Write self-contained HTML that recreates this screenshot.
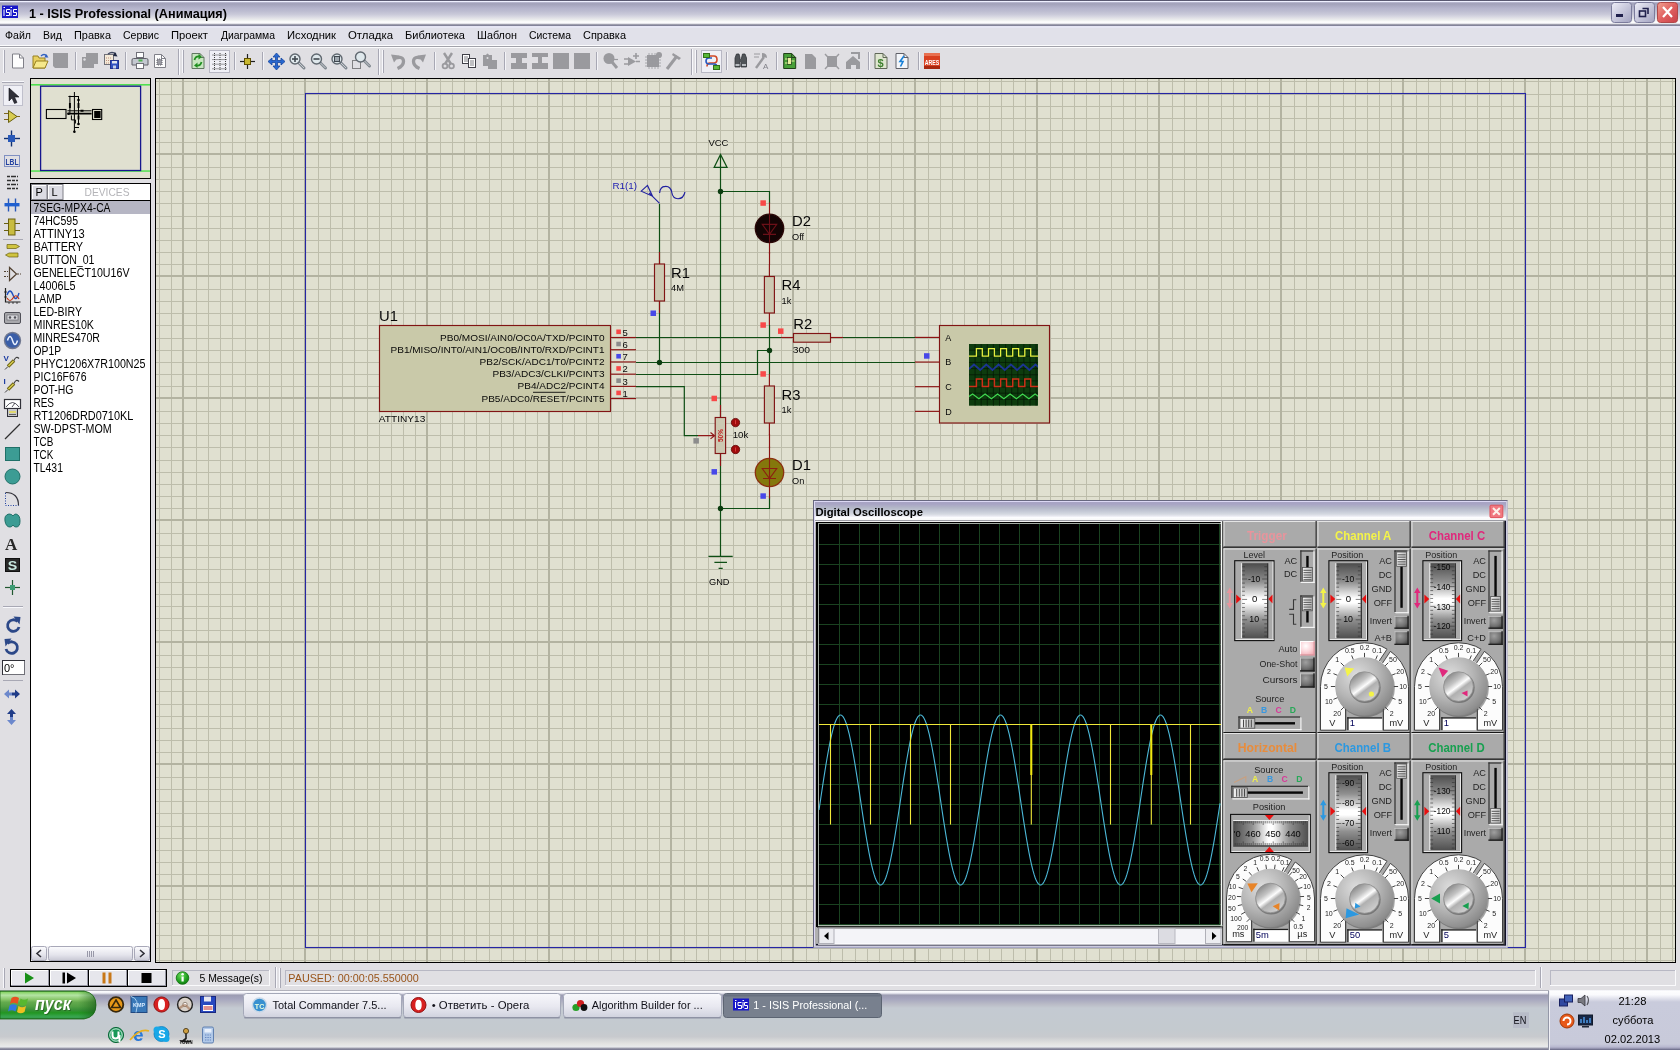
<!DOCTYPE html>
<html lang="ru"><head><meta charset="utf-8"><title>1 - ISIS Professional</title>
<style>html,body{margin:0;padding:0}body{width:1680px;height:1050px;overflow:hidden;position:relative;background:#e0dfe3;font-family:"Liberation Sans",sans-serif}svg text{white-space:pre}</style></head>
<body>
<div id="titlebar" style="position:absolute;left:0px;top:0px;width:1680px;height:26px;overflow:hidden;will-change:transform;"><svg width="1680" height="26" viewBox="0 0 1680 26" style="position:absolute;left:0;top:0;display:block" font-family="Liberation Sans, sans-serif"><defs><linearGradient id="tg" x1="0" y1="0" x2="0" y2="1"><stop offset="0" stop-color="#505068"/><stop offset="0.035" stop-color="#606078"/><stop offset="0.045" stop-color="#eef0ff"/><stop offset="0.07" stop-color="#eef0ff"/><stop offset="0.09" stop-color="#b8b8d0"/><stop offset="0.13" stop-color="#a4a4bc"/><stop offset="0.17" stop-color="#a4a4bc"/><stop offset="0.31" stop-color="#b4b4cc"/><stop offset="0.42" stop-color="#bcbcd0"/><stop offset="0.54" stop-color="#c8c8d8"/><stop offset="0.62" stop-color="#d4d4e0"/><stop offset="0.69" stop-color="#e0e0e6"/><stop offset="0.77" stop-color="#eceeee"/><stop offset="0.85" stop-color="#ffffff"/><stop offset="0.89" stop-color="#f6f6fa"/><stop offset="0.925" stop-color="#c8c8d0"/><stop offset="0.96" stop-color="#74748a"/><stop offset="1" stop-color="#9090a8"/></linearGradient><linearGradient id="bg1" x1="0" y1="0" x2="1" y2="1"><stop offset="0" stop-color="#eeeef8"/><stop offset="1" stop-color="#a2a2c0"/></linearGradient><linearGradient id="bg2" x1="0" y1="0" x2="1" y2="1"><stop offset="0" stop-color="#f0a090"/><stop offset="0.5" stop-color="#e06060"/><stop offset="1" stop-color="#c84048"/></linearGradient></defs><rect x="0" y="0" width="1680" height="26" fill="url(#tg)"/><rect x="2" y="5.5" width="16" height="12.5" fill="#1818c8"/><path d="M4 9.5v6.5M3.500 7.500h1.500M6 15.500h3.500v-3h-3v-3h3.500M11 9.500v6.500M10.500 7.500h1.500M13 15.500h3.500v-3h-3v-3h3.500" fill="none" stroke="#fff" stroke-width="1"/><text x="29" y="18" font-size="13" fill="#000" font-weight="bold" textLength="198" lengthAdjust="spacingAndGlyphs">1 - ISIS Professional (Анимация)</text><rect x="1611.5" y="2.5" width="20" height="20" fill="url(#bg1)" stroke="#7c7c9c" stroke-width="1" rx="3"/><rect x="1616" y="14" width="7" height="3" fill="#20204c"/><rect x="1634.5" y="2.5" width="20" height="20" fill="url(#bg1)" stroke="#7c7c9c" stroke-width="1" rx="3"/><path d="M1642.5 8.5h5.5v5.5" fill="none" stroke="#20204c" stroke-width="1.6"/><rect x="1639.5" y="11" width="6" height="5.5" fill="none" stroke="#20204c" stroke-width="1.6"/><rect x="1657.5" y="2.5" width="20" height="20" fill="url(#bg2)" stroke="#b04848" stroke-width="1" rx="3"/><path d="M1663 7l9 10M1672 7l-9 10" fill="none" stroke="#fff" stroke-width="2.2"/></svg></div>
<div id="menubar" style="position:absolute;left:0px;top:26px;width:1680px;height:20px;overflow:hidden;will-change:transform;"><svg width="1680" height="20" viewBox="0 26 1680 20" style="position:absolute;left:0;top:0;display:block" font-family="Liberation Sans, sans-serif"><rect x="0" y="26" width="1680" height="20" fill="#e1e1ea"/><rect x="0" y="26" width="1680" height="2" fill="#e6e6f4"/><rect x="0" y="45" width="1680" height="1" fill="#fcfcfe"/><text x="5" y="39" font-size="11" fill="#000" textLength="26" lengthAdjust="spacingAndGlyphs">Файл</text><text x="43" y="39" font-size="11" fill="#000" textLength="19" lengthAdjust="spacingAndGlyphs">Вид</text><text x="74" y="39" font-size="11" fill="#000" textLength="37" lengthAdjust="spacingAndGlyphs">Правка</text><text x="123" y="39" font-size="11" fill="#000" textLength="36" lengthAdjust="spacingAndGlyphs">Сервис</text><text x="171" y="39" font-size="11" fill="#000" textLength="37" lengthAdjust="spacingAndGlyphs">Проект</text><text x="221" y="39" font-size="11" fill="#000" textLength="54" lengthAdjust="spacingAndGlyphs">Диаграмма</text><text x="287" y="39" font-size="11" fill="#000" textLength="49" lengthAdjust="spacingAndGlyphs">Исходник</text><text x="348" y="39" font-size="11" fill="#000" textLength="45" lengthAdjust="spacingAndGlyphs">Отладка</text><text x="405" y="39" font-size="11" fill="#000" textLength="60" lengthAdjust="spacingAndGlyphs">Библиотека</text><text x="477" y="39" font-size="11" fill="#000" textLength="40" lengthAdjust="spacingAndGlyphs">Шаблон</text><text x="529" y="39" font-size="11" fill="#000" textLength="42" lengthAdjust="spacingAndGlyphs">Система</text><text x="583" y="39" font-size="11" fill="#000" textLength="43" lengthAdjust="spacingAndGlyphs">Справка</text></svg></div>
<div id="toolbar" style="position:absolute;left:0px;top:46px;width:1680px;height:32px;overflow:hidden;will-change:transform;"><svg width="1680" height="32" viewBox="0 46 1680 32" style="position:absolute;left:0;top:0;display:block" font-family="Liberation Sans, sans-serif"><rect x="0" y="46" width="1680" height="32" fill="#e0dfe3"/><rect x="0" y="46" width="1680" height="1" fill="#a2a2aa"/><rect x="0" y="47" width="1680" height="1" fill="#fbfbfd"/><rect x="3" y="50" width="1" height="23" fill="#f8f8fc"/><rect x="4" y="50" width="1" height="23" fill="#a8a8b4"/><rect x="182" y="50" width="1" height="23" fill="#f8f8fc"/><rect x="183" y="50" width="1" height="23" fill="#a8a8b4"/><rect x="382" y="50" width="1" height="23" fill="#f8f8fc"/><rect x="383" y="50" width="1" height="23" fill="#a8a8b4"/><rect x="695" y="50" width="1" height="23" fill="#f8f8fc"/><rect x="696" y="50" width="1" height="23" fill="#a8a8b4"/><rect x="178" y="49" width="1" height="26" fill="#a8a8b4"/><rect x="179" y="49" width="1" height="26" fill="#f8f8fc"/><rect x="378" y="49" width="1" height="26" fill="#a8a8b4"/><rect x="379" y="49" width="1" height="26" fill="#f8f8fc"/><rect x="691" y="49" width="1" height="26" fill="#a8a8b4"/><rect x="692" y="49" width="1" height="26" fill="#f8f8fc"/><rect x="75" y="52" width="1" height="18" fill="#a8a8b4"/><rect x="76" y="52" width="1" height="18" fill="#f4f4f8"/><rect x="125" y="52" width="1" height="18" fill="#a8a8b4"/><rect x="126" y="52" width="1" height="18" fill="#f4f4f8"/><rect x="234" y="52" width="1" height="18" fill="#a8a8b4"/><rect x="235" y="52" width="1" height="18" fill="#f4f4f8"/><rect x="262" y="52" width="1" height="18" fill="#a8a8b4"/><rect x="263" y="52" width="1" height="18" fill="#f4f4f8"/><rect x="434" y="52" width="1" height="18" fill="#a8a8b4"/><rect x="435" y="52" width="1" height="18" fill="#f4f4f8"/><rect x="504" y="52" width="1" height="18" fill="#a8a8b4"/><rect x="505" y="52" width="1" height="18" fill="#f4f4f8"/><rect x="596" y="52" width="1" height="18" fill="#a8a8b4"/><rect x="597" y="52" width="1" height="18" fill="#f4f4f8"/><rect x="726" y="52" width="1" height="18" fill="#a8a8b4"/><rect x="727" y="52" width="1" height="18" fill="#f4f4f8"/><rect x="776" y="52" width="1" height="18" fill="#a8a8b4"/><rect x="777" y="52" width="1" height="18" fill="#f4f4f8"/><rect x="868" y="52" width="1" height="18" fill="#a8a8b4"/><rect x="869" y="52" width="1" height="18" fill="#f4f4f8"/><rect x="918" y="52" width="1" height="18" fill="#a8a8b4"/><rect x="919" y="52" width="1" height="18" fill="#f4f4f8"/><path d="M12.5 54h7l4 4v10h-11z" fill="#fdfdfd" stroke="#808088" stroke-width="1"/><path d="M19.5 54v4h4" fill="none" stroke="#808088" stroke-width="1"/><path d="M33 56h5l1 2h6v10h-12z" fill="#e8d060" stroke="#988020" stroke-width="1"/><path d="M33 68l3 -7h12l-3 7z" fill="#f6e88a" stroke="#988020" stroke-width="1"/><path d="M41 56q3 -3 6 0" fill="none" stroke="#3060c0" stroke-width="1.4"/><polygon points="46,54 48.5,57.5 44.5,57.5" fill="#3060c0"/><path d="M53 53h15v15h-13l-2 -2z" fill="#9a9a9e"/><path d="M86 53h12v11h-4v4h-12v-11h4z" fill="#9a9a9e"/><circle cx="84.5" cy="59.5" r="1.2" fill="#e0dfe3"/><rect x="104.5" y="54.5" width="9" height="10" fill="#f4ead8" stroke="#707078" stroke-width="1"/><path d="M106 58h6M106 60.5h6M106 63h6" fill="none" stroke="#c09080" stroke-width="1" stroke-dasharray="1 1"/><path d="M108 54q4 -3 8 0" fill="none" stroke="#404860" stroke-width="1.3"/><polygon points="115,52 117.5,56.5 113,56" fill="#202840"/><rect x="110.5" y="60.5" width="8" height="8" fill="#3050c0" stroke="#203090" stroke-width="1"/><rect x="112" y="61" width="5" height="2.5" fill="#e0e4f0"/><rect x="113" y="65.5" width="3" height="3" fill="#c8d0e8"/><rect x="136.5" y="52.5" width="7" height="5" fill="#fff" stroke="#707078" stroke-width="1"/><path d="M133.500 58.500h13q1.500 0 1.500 1.500v5h-16v-5q0 -1.500 1.500 -1.500z" fill="#c4c8d0" stroke="#606068" stroke-width="1"/><rect x="136.5" y="63.5" width="7" height="5" fill="#fff" stroke="#707078" stroke-width="1"/><rect x="138.5" y="59.5" width="4" height="2" fill="#50b050"/><path d="M154.5 54.5h7l4 4v9h-11z" fill="#fdfdfd" stroke="#808088" stroke-width="1"/><path d="M161.5 54.5v4h4" fill="none" stroke="#808088" stroke-width="1"/><rect x="157" y="59" width="5" height="6" fill="#9a9aa2" stroke-dasharray="1 1" stroke="#606068"/><path d="M192 53.5h8l4 4v11h-12z" fill="#c8e6c0" stroke="#607860" stroke-width="1"/><path d="M200 53.5v4h4" fill="none" stroke="#607860" stroke-width="1"/><path d="M194.500 60q1 -4 5 -3.500M201.500 62q-1 4 -5 3.500" fill="none" stroke="#209020" stroke-width="1.8"/><polygon points="198.5,54 202,57 198.5,59.5" fill="#209020"/><polygon points="197.5,62.5 194,65.5 197.5,68" fill="#209020"/><rect x="209.5" y="50.5" width="20" height="22" fill="#f0f0f6" stroke="#b8b8c4" stroke-width="1"/><line x1="212.5" y1="55" x2="227" y2="55" stroke="#404040" stroke-width="1" stroke-dasharray="1 1"/><line x1="212.5" y1="59.6" x2="227" y2="59.6" stroke="#404040" stroke-width="1" stroke-dasharray="1 1"/><line x1="212.5" y1="64.2" x2="227" y2="64.2" stroke="#404040" stroke-width="1" stroke-dasharray="1 1"/><line x1="212.5" y1="68.8" x2="227" y2="68.8" stroke="#404040" stroke-width="1" stroke-dasharray="1 1"/><line x1="214.5" y1="53" x2="214.5" y2="71" stroke="#404040" stroke-width="1" stroke-dasharray="1 1"/><line x1="220" y1="53" x2="220" y2="71" stroke="#404040" stroke-width="1" stroke-dasharray="1 1"/><line x1="225.5" y1="53" x2="225.5" y2="71" stroke="#404040" stroke-width="1" stroke-dasharray="1 1"/><line x1="240" y1="61.5" x2="255" y2="61.5" stroke="#202020" stroke-width="1.2"/><line x1="247.5" y1="54" x2="247.5" y2="69" stroke="#202020" stroke-width="1.2"/><rect x="244.5" y="58.5" width="6" height="6" fill="#c8b830" stroke="#605000" stroke-width="1"/><path d="M276.500 53l3.500 4h-2.500v3.500h3.500v-2.500l4 3.500l-4 3.500v-2.500h-3.500v3.500h2.500l-3.500 4l-3.500 -4h2.500v-3.500h-3.500v2.500l-4 -3.500l4 -3.500v2.500h3.500v-3.500h-2.500z" fill="#2868d0" stroke="#1848a0" stroke-width="0.8"/><line x1="298" y1="62" x2="304" y2="68" stroke="#808890" stroke-width="3" stroke-linecap="round"/><line x1="299" y1="63" x2="304" y2="68" stroke="#c8ccd0" stroke-width="1"/><circle cx="295" cy="59" r="5" fill="#dfe8ec" stroke="#606870" stroke-width="1.4"/><line x1="292" y1="59" x2="298" y2="59" stroke="#404850" stroke-width="1.6"/><line x1="295" y1="56" x2="295" y2="62" stroke="#404850" stroke-width="1.6"/><line x1="319.5" y1="62" x2="325.5" y2="68" stroke="#808890" stroke-width="3" stroke-linecap="round"/><line x1="320.5" y1="63" x2="325.5" y2="68" stroke="#c8ccd0" stroke-width="1"/><circle cx="316.5" cy="59" r="5" fill="#dfe8ec" stroke="#606870" stroke-width="1.4"/><line x1="313.5" y1="59" x2="319.5" y2="59" stroke="#404850" stroke-width="1.6"/><line x1="340" y1="62" x2="346" y2="68" stroke="#808890" stroke-width="3" stroke-linecap="round"/><line x1="341" y1="63" x2="346" y2="68" stroke="#c8ccd0" stroke-width="1"/><circle cx="337" cy="59" r="5" fill="#dfe8ec" stroke="#606870" stroke-width="1.4"/><rect x="334.5" y="56.5" width="5" height="5" fill="#a0a8b0" stroke="#404850" stroke-width="1"/><rect x="352.5" y="60.5" width="8" height="8" fill="none" stroke="#202020" stroke-width="1" stroke-dasharray="1 1"/><line x1="363.5" y1="60" x2="369.5" y2="66" stroke="#808890" stroke-width="3" stroke-linecap="round"/><line x1="364.5" y1="61" x2="369.5" y2="66" stroke="#c8ccd0" stroke-width="1"/><circle cx="360.5" cy="57" r="5" fill="#dfe8ec" stroke="#606870" stroke-width="1.4"/><polygon points="391,54.5 399.5,55.5 394,62.5" fill="#9a9a9e"/><path d="M396 58q7.500 -2 7.500 3.500q0 4.500 -6 7" fill="none" stroke="#9a9a9e" stroke-width="3.3"/><polygon points="426,54.5 417.5,55.5 423,62.5" fill="#9a9a9e"/><path d="M421 58q-7.500 -2 -7.500 3.500q0 4.500 6 7" fill="none" stroke="#9a9a9e" stroke-width="3.3"/><path d="M444 53l7 11M452 53l-7 11" fill="none" stroke="#9a9a9e" stroke-width="2.4"/><circle cx="445" cy="66" r="2.4" fill="none" stroke="#9a9a9e" stroke-width="1.8"/><circle cx="451.5" cy="66" r="2.4" fill="none" stroke="#9a9a9e" stroke-width="1.8"/><rect x="462.5" y="54.5" width="7" height="9" fill="#fff" stroke="#404048" stroke-width="1"/><path d="M464 57h4M464 59h4M464 61h4" fill="none" stroke="#606068" stroke-width="0.8"/><rect x="468.5" y="58.5" width="7" height="9" fill="#fff" stroke="#404048" stroke-width="1"/><path d="M470 61h4M470 63h4M470 65h4" fill="none" stroke="#606068" stroke-width="0.8"/><path d="M483 55h3q1.500 -3 3 0h3v5h5v9h-9v-3h-5z" fill="#9a9a9e"/><circle cx="487.5" cy="58" r="1" fill="#e0dfe3"/><path d="M511 53h16v5h-5v5h5v6h-16v-6h5v-5h-5z" fill="#9a9a9e"/><path d="M532 53h16v4h-6v6h6v6h-16v-6h6v-6h-6z" fill="#9a9a9e"/><rect x="553" y="53" width="16" height="16" fill="#9a9a9e"/><rect x="574" y="53" width="16" height="16" fill="#9a9a9e"/><circle cx="609" cy="58.5" r="5.5" fill="#9a9a9e"/><line x1="612" y1="62" x2="617" y2="68" stroke="#9a9a9e" stroke-width="3"/><line x1="613" y1="59.5" x2="618" y2="59.5" stroke="#9a9a9e" stroke-width="1.2"/><path d="M628 57l8 4.500l-8 4.500z" fill="#9a9a9e"/><path d="M624 59h4M624 64h4M636 61.500h4M636 53v6M633 56h6" fill="none" stroke="#9a9a9e" stroke-width="1.6"/><rect x="647" y="55" width="12" height="12" fill="#9a9a9e"/><path d="M649 53v16M652 53v16M655 53v16M658 53v16M645 57h16M645 60h16M645 63h16M645 66h16" fill="none" stroke="#9a9a9e" stroke-width="0.8"/><circle cx="659" cy="55" r="3" fill="#9a9a9e"/><line x1="667" y1="69" x2="677" y2="56" stroke="#9a9a9e" stroke-width="3"/><path d="M673 53l8 5l-2 2l-7 -5z" fill="#9a9a9e"/><rect x="701.5" y="50.5" width="20" height="22" fill="#f0f0f6" stroke="#b8b8c4" stroke-width="1"/><path d="M710 56h4q3 0 3 3.500t-3 3.500h-4q-3 0 -3 3.500" fill="none" stroke="#d04828" stroke-width="1.6"/><path d="M712 58h-3q-3 0 -3 3t3 3h5q3 0 3 3" fill="none" stroke="#2858c0" stroke-width="1.6"/><rect x="703.5" y="53.5" width="6" height="4" fill="#58b838" stroke="#307018" stroke-width="1"/><rect x="713.5" y="65.5" width="6" height="4" fill="#58b838" stroke="#307018" stroke-width="1"/><path d="M735 58l1.500 -4h2.500l1 4v9h-5zM741.500 58l1 -4h2.500l1.500 4v9h-5.500z" fill="#505458" stroke="#303438" stroke-width="0.8"/><rect x="739.5" y="59" width="2.5" height="3" fill="#505458"/><rect x="735.5" y="64" width="4" height="2" fill="#b8bcc0"/><rect x="742" y="64" width="4" height="2" fill="#b8bcc0"/><line x1="756" y1="68" x2="764" y2="57" stroke="#9a9a9e" stroke-width="2.4"/><path d="M762 53q5 0 5 5l-3 -1l-2 1z" fill="#9a9a9e"/><path d="M754 54h6M754 57h5" fill="none" stroke="#9a9a9e" stroke-width="1"/><text x="763" y="69" font-size="8" fill="#808088">A</text><path d="M783.7 53.5h8l4 4v11h-12z" fill="#48a038" stroke="#204018" stroke-width="1"/><path d="M791.7 53.5v4h4" fill="none" stroke="#204018" stroke-width="1"/><rect x="787.5" y="57.5" width="4" height="7" fill="#e8f0a0" stroke="#204018" stroke-width="0.8"/><path d="M785 59h2.500M785 63h2.500M791.500 61h3" fill="none" stroke="#e8f0a0" stroke-width="1"/><path d="M805 54h7l4 4v11h-11z" fill="#9a9a9e"/><path d="M825 54l14 15M839 54l-14 15" fill="none" stroke="#9a9a9e" stroke-width="1.4"/><rect x="827" y="56" width="10" height="11" fill="#9a9a9e"/><path d="M846 62l7 -6l7 6v7h-4v-4h-5v4h-5z" fill="#9a9a9e"/><path d="M851 53h8v6" fill="none" stroke="#9a9a9e" stroke-width="2"/><path d="M875 53.5h8l4 4v11h-12z" fill="#dfe6d0" stroke="#606858" stroke-width="1"/><path d="M883 53.5v4h4" fill="none" stroke="#606858" stroke-width="1"/><text x="877.5" y="66.5" font-size="11" fill="#408030" font-weight="bold">$</text><path d="M896 53.5h8l4 4v11h-12z" fill="#f4f6fa" stroke="#606068" stroke-width="1"/><path d="M904 53.5v4h4" fill="none" stroke="#606068" stroke-width="1"/><path d="M904 56l-4 5.500h3l-2.500 5" fill="none" stroke="#1880d8" stroke-width="1.6"/><rect x="924" y="53" width="16" height="16" fill="#d84020"/><rect x="924" y="53" width="16" height="3" fill="#e87050"/><rect x="924" y="66" width="16" height="3" fill="#a82810"/><text x="924.8" y="65" font-size="8" fill="#fff" font-weight="bold" textLength="14.5" lengthAdjust="spacingAndGlyphs">ARES</text></svg></div>
<div id="leftpanel" style="position:absolute;left:0px;top:78px;width:155px;height:888px;overflow:hidden;will-change:transform;"><svg width="155" height="888" viewBox="0 78 155 888" style="position:absolute;left:0;top:0;display:block" font-family="Liberation Sans, sans-serif"><defs><linearGradient id="sbg" x1="0" y1="0" x2="0" y2="1"><stop offset="0" stop-color="#fcfcfe"/><stop offset="0.6" stop-color="#e4e4ec"/><stop offset="1" stop-color="#c8c8d4"/></linearGradient></defs><rect x="0" y="78" width="155" height="888" fill="#e0dfe3"/><rect x="2" y="81" width="22" height="1" fill="#f8f8fc"/><rect x="2" y="82" width="22" height="1" fill="#a8a8b4"/><rect x="3.5" y="85.5" width="19" height="20" fill="#f0f0f6" stroke="#c0c0cc" stroke-width="1"/><path d="M9 88v13l3 -3l2.500 5.500l2.500 -1l-2.500 -5.500h4.500z" fill="#303038" stroke="#101018" stroke-width="0.6"/><path d="M4 113.5h5M4 119.5h5M16 116.5h4" fill="none" stroke="#806820" stroke-width="1"/><polygon points="8.5,110.5 17,116.5 8.5,122.5" fill="#d8cc50" stroke="#6a6010" stroke-width="1"/><line x1="4" y1="138.5" x2="20" y2="138.5" stroke="#103070" stroke-width="1.4"/><line x1="11.5" y1="130.5" x2="11.5" y2="146.5" stroke="#103070" stroke-width="1.4"/><rect x="8" y="135" width="7" height="7" fill="#2858b8"/><rect x="4.5" y="155.5" width="15" height="11" fill="none" stroke="#2040a0" stroke-width="1" stroke-dasharray="1 1"/><text x="5.5" y="164.5" font-size="8.5" fill="#2040a0" font-weight="bold" textLength="13" lengthAdjust="spacingAndGlyphs">LBL</text><line x1="7" y1="176.5" x2="18" y2="176.5" stroke="#303030" stroke-width="1.6" stroke-dasharray="3 1 5 1"/><line x1="7" y1="180.5" x2="18" y2="180.5" stroke="#303030" stroke-width="1.6" stroke-dasharray="4 1 3 1 2"/><line x1="7" y1="184.5" x2="18" y2="184.5" stroke="#303030" stroke-width="1.6" stroke-dasharray="3 1 5 1"/><line x1="7" y1="188.5" x2="18" y2="188.5" stroke="#303030" stroke-width="1.6" stroke-dasharray="4 1 3 1 2"/><line x1="8.5" y1="198.5" x2="8.5" y2="211.5" stroke="#2858b8" stroke-width="1.4"/><line x1="15.5" y1="198.5" x2="15.5" y2="211.5" stroke="#2858b8" stroke-width="1.4"/><rect x="4.5" y="203" width="15" height="3.4" fill="#2060d0"/><path d="M4 223.5h5M4 230.5h5M15 223.5h5M15 230.5h5" fill="none" stroke="#6a6010" stroke-width="1"/><rect x="8.5" y="219" width="6.5" height="16" fill="#c8bc40" stroke="#6a6010" stroke-width="1"/><rect x="3" y="239" width="20" height="1" fill="#a8a8b4"/><path d="M7 244.5h9l3.500 2l-3.500 2h-9z" fill="#d0c440" stroke="#6a6010" stroke-width="0.7"/><path d="M18 253h-9l-3.500 2l3.500 2h9z" fill="#d0c440" stroke="#6a6010" stroke-width="0.7"/><path d="M4 271.5h4M4 276.5h4M17 274h4" fill="none" stroke="#504030" stroke-width="1" stroke-dasharray="2 1"/><path d="M9.500 267.5v13l7 -6.500z" fill="none" stroke="#504030" stroke-width="1.2"/><path d="M5.500 288v14h15" fill="none" stroke="#202020" stroke-width="1.2"/><path d="M4 292h3M4 297h3M9 302v2M13 302v2M17 302v2" fill="none" stroke="#202020" stroke-width="0.8"/><path d="M7 295q3 -8 6 0t6 -2" fill="none" stroke="#2050c0" stroke-width="1.4"/><path d="M7 298q3 5 6 0t6 1" fill="none" stroke="#c03010" stroke-width="1.2"/><rect x="4.5" y="312.5" width="16" height="11" fill="#a8a8ac" stroke="#505058" stroke-width="1" rx="1.5"/><rect x="7" y="315" width="11" height="5" fill="#d8d8dc" stroke="#606068" stroke-width="0.6"/><circle cx="10" cy="317.5" r="1.2" fill="#505058"/><circle cx="15" cy="317.5" r="1.2" fill="#505058"/><circle cx="12.5" cy="340.5" r="8" fill="#3a5ea8" stroke="#707890" stroke-width="1.4"/><path d="M7.500 340.5q2.500 -8 5 0t5 0" fill="none" stroke="#e8f0ff" stroke-width="1.5"/><text x="3.5" y="360.5" font-size="8" fill="#1838a0" font-weight="bold">V</text><line x1="5" y1="369.5" x2="8" y2="366.5" stroke="#404040" stroke-width="1"/><line x1="8" y1="366.5" x2="14" y2="360.5" stroke="#6a6010" stroke-width="3.4"/><line x1="8.5" y1="366" x2="13.5" y2="361" stroke="#d8cc50" stroke-width="1.6"/><path d="M14 360.5q2 -5 5 -2" fill="none" stroke="#404040" stroke-width="1.2"/><text x="3.5" y="383.5" font-size="8" fill="#1838a0" font-weight="bold">I</text><line x1="5" y1="392.5" x2="8" y2="389.5" stroke="#404040" stroke-width="1"/><line x1="8" y1="389.5" x2="14" y2="383.5" stroke="#6a6010" stroke-width="3.4"/><line x1="8.5" y1="389" x2="13.5" y2="384" stroke="#d8cc50" stroke-width="1.6"/><path d="M14 383.5q2 -5 5 -2" fill="none" stroke="#404040" stroke-width="1.2"/><rect x="4.5" y="399.5" width="16" height="9" fill="#fff" stroke="#303038" stroke-width="1.2"/><path d="M6 407q6.500 -9 13 0M12 407l3 -4" fill="none" stroke="#404048" stroke-width="0.9"/><rect x="7.5" y="408.5" width="10" height="8" fill="#c8c8cc" stroke="#303038" stroke-width="1"/><rect x="9" y="411" width="7" height="2" fill="#e0d870"/><rect x="9" y="414" width="7" height="1" fill="#606060"/><line x1="5" y1="439" x2="20" y2="424" stroke="#303030" stroke-width="1.3"/><rect x="5.5" y="447.5" width="14" height="13" fill="#3c9c94" stroke="#207068" stroke-width="1"/><circle cx="12.5" cy="476.5" r="7.5" fill="#3c9c94" stroke="#207068" stroke-width="1"/><path d="M5.500 492.500q13 0 13 13" fill="none" stroke="#303038" stroke-width="1.2"/><path d="M5.500 493v12.500h13" fill="none" stroke="#2040a0" stroke-width="1" stroke-dasharray="1 1.500"/><path d="M9 514q-5 1 -4 7t5 6q2 0 3 -2q1 2 3 2q4 0 4 -6t-4 -7q-2 0 -3 2q-1 -2 -4 -2z" fill="#3c9c94" stroke="#207068" stroke-width="1"/><text x="5" y="549.5" font-size="17" fill="#282828" font-weight="bold" font-family="Liberation Serif">A</text><rect x="5.5" y="558.5" width="14" height="13" fill="#282828" stroke="#101010" stroke-width="1"/><text x="7.8" y="570" font-size="12" fill="#c8e8e0" font-weight="bold" textLength="9.5" lengthAdjust="spacingAndGlyphs">S</text><line x1="5" y1="587.5" x2="20" y2="587.5" stroke="#205830" stroke-width="1.2"/><line x1="12.5" y1="580" x2="12.5" y2="595" stroke="#205830" stroke-width="1.2"/><rect x="10" y="585" width="5" height="5" fill="#3c9c74"/><rect x="3" y="606" width="20" height="1" fill="#a8a8b4"/><rect x="3" y="607" width="20" height="1" fill="#f8f8fc"/><path d="M17.500 621.500a5.800 5.800 0 1 0 1.500 5.500" fill="none" stroke="#2c4888" stroke-width="2.8"/><polygon points="13.5,616.5 20.5,617 19.5,624.5" fill="#2c4888"/><path d="M7.500 643.500a5.800 5.800 0 1 1 -1.500 5.500" fill="none" stroke="#2c4888" stroke-width="2.8"/><polygon points="11.5,638.5 4.5,639 5.5,646.5" fill="#2c4888"/><rect x="2.5" y="660.5" width="22" height="14" fill="#fff" stroke="#707078" stroke-width="1"/><rect x="2" y="660" width="23" height="1" fill="#303038"/><rect x="2" y="660" width="1" height="15" fill="#303038"/><text x="4" y="671.5" font-size="11" fill="#000">0°</text><rect x="3" y="680" width="20" height="1" fill="#a8a8b4"/><path d="M4 694l5 -4.500v3h3v3h-3v3z" fill="#6c88cc"/><path d="M12 692.500h3v-3l5 4.500l-5 4.500v-3h-3z" fill="#203c88"/><path d="M11.500 709l4.500 5h-3v3h-3v-3h-3z" fill="#203c88"/><path d="M10 717h3v3h3l-4.500 5l-4.500 -5h3z" fill="#6c88cc"/><rect x="30.5" y="78.5" width="120" height="100" fill="#e0e0d0" stroke="#000" stroke-width="1"/><rect x="31" y="84" width="119" height="1.6" fill="#50e050"/><rect x="31" y="170.3" width="119" height="1.5" fill="#50e050"/><rect x="40.6" y="86.2" width="100" height="84.3" fill="none" stroke="#16168e" stroke-width="1.3"/><rect x="46.4" y="109.5" width="19.6" height="9" fill="none" stroke="#000" stroke-width="1.1"/><rect x="92.5" y="109.5" width="9.2" height="10" fill="none" stroke="#000" stroke-width="1.1"/><rect x="94.2" y="111" width="6.4" height="7" fill="#000"/><path d="M74.400 92V132M69.900 95.700V113M78.500 96.200V124.500M68.400 96.500H79M67.400 110.800H91.600M71.400 115.400V119.900H75.400V123.500M74.400 127.500H79" fill="none" stroke="#000" stroke-width="1"/><path d="M67.400 113.600H91.600M69.900 103V108M78.500 103V108M78.500 115.500V119.500M80.500 110.800H83.500" fill="none" stroke="#000" stroke-width="1.9"/><circle cx="74.4" cy="131.8" r="1.3" fill="#000"/><circle cx="78.5" cy="100" r="1.3" fill="#000"/><circle cx="78.5" cy="124" r="1.3" fill="#000"/><circle cx="68.6" cy="113.8" r="1.3" fill="#000"/><rect x="30.5" y="183.5" width="120" height="778" fill="#fff" stroke="#000" stroke-width="1"/><rect x="31" y="184" width="119" height="16" fill="#fff"/><rect x="31" y="200" width="119" height="1" fill="#000"/><rect x="31.5" y="184.5" width="15.5" height="15" fill="#dcdce4" stroke="#808088" stroke-width="1"/><rect x="32" y="185" width="14" height="1" fill="#fff"/><rect x="32" y="185" width="1" height="14" fill="#fff"/><text x="35.5" y="196" font-size="11" fill="#000">P</text><rect x="47.5" y="184.5" width="15.5" height="15" fill="#dcdce4" stroke="#808088" stroke-width="1"/><rect x="48" y="185" width="14" height="1" fill="#fff"/><rect x="48" y="185" width="1" height="14" fill="#fff"/><text x="51.5" y="196" font-size="11" fill="#000">L</text><text x="84.5" y="195.5" font-size="10.5" fill="#b4b4b8" textLength="45" lengthAdjust="spacingAndGlyphs">DEVICES</text><rect x="31" y="201" width="119" height="13" fill="#b6b6c4"/><text x="33.5" y="211.7" font-size="12" fill="#000" textLength="77" lengthAdjust="spacingAndGlyphs">7SEG-MPX4-CA</text><text x="33.5" y="224.7" font-size="12" fill="#000" textLength="44.5" lengthAdjust="spacingAndGlyphs">74HC595</text><text x="33.5" y="237.7" font-size="12" fill="#000" textLength="51.1" lengthAdjust="spacingAndGlyphs">ATTINY13</text><text x="33.5" y="250.7" font-size="12" fill="#000" textLength="49.5" lengthAdjust="spacingAndGlyphs">BATTERY</text><text x="33.5" y="263.7" font-size="12" fill="#000" textLength="61" lengthAdjust="spacingAndGlyphs">BUTTON_01</text><text x="33.5" y="276.7" font-size="12" fill="#000" textLength="96" lengthAdjust="spacingAndGlyphs">GENELECT10U16V</text><text x="33.5" y="289.7" font-size="12" fill="#000" textLength="41.9" lengthAdjust="spacingAndGlyphs">L4006L5</text><text x="33.5" y="302.7" font-size="12" fill="#000" textLength="28.2" lengthAdjust="spacingAndGlyphs">LAMP</text><text x="33.5" y="315.7" font-size="12" fill="#000" textLength="48.5" lengthAdjust="spacingAndGlyphs">LED-BIRY</text><text x="33.5" y="328.7" font-size="12" fill="#000" textLength="60.5" lengthAdjust="spacingAndGlyphs">MINRES10K</text><text x="33.5" y="341.7" font-size="12" fill="#000" textLength="66.5" lengthAdjust="spacingAndGlyphs">MINRES470R</text><text x="33.5" y="354.7" font-size="12" fill="#000" textLength="27.5" lengthAdjust="spacingAndGlyphs">OP1P</text><text x="33.5" y="367.7" font-size="12" fill="#000" textLength="112" lengthAdjust="spacingAndGlyphs">PHYC1206X7R100N25</text><text x="33.5" y="380.7" font-size="12" fill="#000" textLength="53" lengthAdjust="spacingAndGlyphs">PIC16F676</text><text x="33.5" y="393.7" font-size="12" fill="#000" textLength="40" lengthAdjust="spacingAndGlyphs">POT-HG</text><text x="33.5" y="406.7" font-size="12" fill="#000" textLength="20.5" lengthAdjust="spacingAndGlyphs">RES</text><text x="33.5" y="419.7" font-size="12" fill="#000" textLength="99.8" lengthAdjust="spacingAndGlyphs">RT1206DRD0710KL</text><text x="33.5" y="432.7" font-size="12" fill="#000" textLength="78.1" lengthAdjust="spacingAndGlyphs">SW-DPST-MOM</text><text x="33.5" y="445.7" font-size="12" fill="#000" textLength="19.8" lengthAdjust="spacingAndGlyphs">TCB</text><text x="33.5" y="458.7" font-size="12" fill="#000" textLength="19.8" lengthAdjust="spacingAndGlyphs">TCK</text><text x="33.5" y="471.7" font-size="12" fill="#000" textLength="29.4" lengthAdjust="spacingAndGlyphs">TL431</text><rect x="31" y="946" width="119" height="15" fill="#f0f0f4"/><rect x="31.5" y="946.5" width="15" height="14" fill="url(#sbg)" stroke="#a8a8b8" stroke-width="1" rx="2"/><rect x="134.5" y="946.5" width="15" height="14" fill="url(#sbg)" stroke="#a8a8b8" stroke-width="1" rx="2"/><rect x="48.5" y="946.5" width="84" height="14" fill="url(#sbg)" stroke="#a8a8b8" stroke-width="1" rx="2"/><path d="M41 950l-4 3.500l4 3.500M140 950l4 3.500l-4 3.500" fill="none" stroke="#303038" stroke-width="1.6"/><path d="M87.500 951v6M89.500 951v6M91.500 951v6M93.500 951v6" fill="none" stroke="#9898a8" stroke-width="1"/></svg></div>
<div id="canvas" style="position:absolute;left:155px;top:78px;width:1525px;height:888px;overflow:hidden;will-change:transform;background:#e0dfe3;"><svg width="1525" height="888" viewBox="155 78 1525 888" style="position:absolute;left:0;top:0;display:block" font-family="Liberation Sans, sans-serif"><defs><clipPath id="ms"><rect x="969" y="344" width="69" height="61.7"/></clipPath></defs><rect x="155" y="78" width="1521" height="885" fill="#e0e0d0"/><path d="M159.5 79V962M171.5 79V962M196.5 79V962M208.5 79V962M220.5 79V962M232.5 79V962M245.5 79V962M257.5 79V962M269.5 79V962M281.5 79V962M293.5 79V962M318.5 79V962M330.5 79V962M342.5 79V962M354.5 79V962M367.5 79V962M379.5 79V962M391.5 79V962M403.5 79V962M415.5 79V962M440.5 79V962M452.5 79V962M464.5 79V962M476.5 79V962M489.5 79V962M501.5 79V962M513.5 79V962M525.5 79V962M537.5 79V962M562.5 79V962M574.5 79V962M586.5 79V962M598.5 79V962M611.5 79V962M623.5 79V962M635.5 79V962M647.5 79V962M659.5 79V962M684.5 79V962M696.5 79V962M708.5 79V962M720.5 79V962M733.5 79V962M745.5 79V962M757.5 79V962M769.5 79V962M781.5 79V962M806.5 79V962M818.5 79V962M830.5 79V962M842.5 79V962M855.5 79V962M867.5 79V962M879.5 79V962M891.5 79V962M903.5 79V962M928.5 79V962M940.5 79V962M952.5 79V962M964.5 79V962M977.5 79V962M989.5 79V962M1001.5 79V962M1013.5 79V962M1025.5 79V962M1050.5 79V962M1062.5 79V962M1074.5 79V962M1086.5 79V962M1099.5 79V962M1111.5 79V962M1123.5 79V962M1135.5 79V962M1147.5 79V962M1172.5 79V962M1184.5 79V962M1196.5 79V962M1208.5 79V962M1221.5 79V962M1233.5 79V962M1245.5 79V962M1257.5 79V962M1269.5 79V962M1294.5 79V962M1306.5 79V962M1318.5 79V962M1330.5 79V962M1343.5 79V962M1355.5 79V962M1367.5 79V962M1379.5 79V962M1391.5 79V962M1416.5 79V962M1428.5 79V962M1440.5 79V962M1452.5 79V962M1465.5 79V962M1477.5 79V962M1489.5 79V962M1501.5 79V962M1513.5 79V962M1538.5 79V962M1550.5 79V962M1562.5 79V962M1574.5 79V962M1587.5 79V962M1599.5 79V962M1611.5 79V962M1623.5 79V962M1635.5 79V962M1660.5 79V962M1672.5 79V962M156 81.5H1675M156 94.5H1675M156 106.5H1675M156 118.5H1675M156 130.5H1675M156 142.5H1675M156 167.5H1675M156 179.5H1675M156 191.5H1675M156 203.5H1675M156 216.5H1675M156 228.5H1675M156 240.5H1675M156 252.5H1675M156 264.5H1675M156 289.5H1675M156 301.5H1675M156 313.5H1675M156 325.5H1675M156 338.5H1675M156 350.5H1675M156 362.5H1675M156 374.5H1675M156 386.5H1675M156 411.5H1675M156 423.5H1675M156 435.5H1675M156 447.5H1675M156 460.5H1675M156 472.5H1675M156 484.5H1675M156 496.5H1675M156 508.5H1675M156 533.5H1675M156 545.5H1675M156 557.5H1675M156 569.5H1675M156 582.5H1675M156 594.5H1675M156 606.5H1675M156 618.5H1675M156 630.5H1675M156 655.5H1675M156 667.5H1675M156 679.5H1675M156 691.5H1675M156 704.5H1675M156 716.5H1675M156 728.5H1675M156 740.5H1675M156 752.5H1675M156 777.5H1675M156 789.5H1675M156 801.5H1675M156 813.5H1675M156 826.5H1675M156 838.5H1675M156 850.5H1675M156 862.5H1675M156 874.5H1675M156 899.5H1675M156 911.5H1675M156 923.5H1675M156 935.5H1675M156 948.5H1675M156 960.5H1675" fill="none" stroke="#bdbdab" stroke-width="1"/><path d="M183 79V962M305 79V962M427 79V962M549 79V962M671 79V962M793 79V962M915 79V962M1037 79V962M1159 79V962M1281 79V962M1403 79V962M1525 79V962M1647 79V962M156 154H1675M156 276H1675M156 398H1675M156 520H1675M156 642H1675M156 764H1675M156 886H1675" fill="none" stroke="#b3b3a1" stroke-width="2"/><rect x="305.5" y="93.5" width="1220" height="854" fill="none" stroke="#2626a4" stroke-width="1.1"/><path d="M720.5 156V556M720.5 191.5H769.5V203M659.5 204V362.5M636 337.5H781M843 337.5H915M636 362.5H915M636 374.5H757.5V350.5H769.5M636 386.6H684.3V435.7H698M769.5 325V374 M769.5 497V508.5H720.5" fill="none" stroke="#0e4e14" stroke-width="1.2"/><path d="M769.5 252V265M769.5 434V448" fill="none" stroke="#8c1212" stroke-width="1.15"/><circle cx="720.5" cy="191.5" r="2.7" fill="#0c3c10"/><circle cx="659.5" cy="362.5" r="2.7" fill="#0c3c10"/><circle cx="769.5" cy="350.5" r="2.7" fill="#0c3c10"/><circle cx="720.5" cy="508.5" r="2.7" fill="#0c3c10"/><text x="708.4" y="145.5" font-size="8.8" fill="#080808" textLength="20" lengthAdjust="spacingAndGlyphs">VCC</text><polygon points="720.5,154.5 714.2,167.3 727,167.3" fill="none" stroke="#0e4e14" stroke-width="1.3"/><path d="M708.500 556.300H732.700M714.400 562.400H727M718.600 568.400H722.700" fill="none" stroke="#0e4e14" stroke-width="1.2"/><text x="709" y="585" font-size="9" fill="#080808" textLength="20.5" lengthAdjust="spacingAndGlyphs">GND</text><text x="612.5" y="188.8" font-size="9" fill="#1c1cb0" textLength="24.6" lengthAdjust="spacingAndGlyphs">R1(1)</text><path d="M641.200 191.200L647.500 185.400L652.500 196.200ZM649 192.800L659.600 203.400" fill="none" stroke="#2020a0" stroke-width="1.15"/><path d="M659.600 193q0.500 -6.700 6.200 -6.700q5 0 6 6.200q1 6.200 6.200 6.200q5.500 0 7 -6.700" fill="none" stroke="#2020a0" stroke-width="1.15"/><text x="379" y="321" font-size="14.8" fill="#080808">U1</text><rect x="379.5" y="325.5" width="231" height="86" fill="#c9c9a9" stroke="#801414" stroke-width="1.15"/><line x1="610.5" y1="337.5" x2="636" y2="337.5" stroke="#8c1212" stroke-width="1.15"/><text x="440" y="340.6" font-size="9.3" fill="#080808" textLength="164.5" lengthAdjust="spacingAndGlyphs">PB0/MOSI/AIN0/OC0A/TXD/PCINT0</text><text x="622.5" y="335.7" font-size="9.5" fill="#080808">5</text><rect x="616.3" y="329.5" width="4.6" height="4.6" fill="#f84848"/><line x1="610.5" y1="349.72" x2="636" y2="349.72" stroke="#8c1212" stroke-width="1.15"/><text x="390.5" y="352.82" font-size="9.3" fill="#080808" textLength="214" lengthAdjust="spacingAndGlyphs">PB1/MISO/INT0/AIN1/OC0B/INT0/RXD/PCINT1</text><text x="622.5" y="347.92" font-size="9.5" fill="#080808">6</text><rect x="616.3" y="341.72" width="4.6" height="4.6" fill="#8c8c8c"/><line x1="610.5" y1="361.94" x2="636" y2="361.94" stroke="#8c1212" stroke-width="1.15"/><text x="479.5" y="365.04" font-size="9.3" fill="#080808" textLength="125" lengthAdjust="spacingAndGlyphs">PB2/SCK/ADC1/T0/PCINT2</text><text x="622.5" y="360.14" font-size="9.5" fill="#080808">7</text><rect x="616.3" y="353.94" width="4.6" height="4.6" fill="#4848e8"/><line x1="610.5" y1="374.16" x2="636" y2="374.16" stroke="#8c1212" stroke-width="1.15"/><text x="492.5" y="377.26" font-size="9.3" fill="#080808" textLength="112" lengthAdjust="spacingAndGlyphs">PB3/ADC3/CLKI/PCINT3</text><text x="622.5" y="372.36" font-size="9.5" fill="#080808">2</text><rect x="616.3" y="366.16" width="4.6" height="4.6" fill="#f84848"/><line x1="610.5" y1="386.38" x2="636" y2="386.38" stroke="#8c1212" stroke-width="1.15"/><text x="517.5" y="389.48" font-size="9.3" fill="#080808" textLength="87" lengthAdjust="spacingAndGlyphs">PB4/ADC2/PCINT4</text><text x="622.5" y="384.58" font-size="9.5" fill="#080808">3</text><rect x="616.3" y="378.38" width="4.6" height="4.6" fill="#8c8c8c"/><line x1="610.5" y1="398.6" x2="636" y2="398.6" stroke="#8c1212" stroke-width="1.15"/><text x="481.5" y="401.7" font-size="9.3" fill="#080808" textLength="123" lengthAdjust="spacingAndGlyphs">PB5/ADC0/RESET/PCINT5</text><text x="622.5" y="396.8" font-size="9.5" fill="#080808">1</text><rect x="616.3" y="390.6" width="4.6" height="4.6" fill="#f84848"/><line x1="533" y1="392.3" x2="565.5" y2="392.3" stroke="#080808" stroke-width="0.9"/><text x="378.8" y="422" font-size="9.3" fill="#080808" textLength="46.5" lengthAdjust="spacingAndGlyphs">ATTINY13</text><line x1="659.5" y1="252" x2="659.5" y2="264" stroke="#8c1212" stroke-width="1.15"/><line x1="659.5" y1="301" x2="659.5" y2="313" stroke="#8c1212" stroke-width="1.15"/><rect x="654.5" y="264" width="10" height="37" fill="#cdc9b2" stroke="#801414" stroke-width="1.15"/><text x="671" y="277.5" font-size="14.8" fill="#080808">R1</text><text x="671" y="291.3" font-size="9.3" fill="#080808">4M</text><rect x="650.5" y="310.5" width="5.5" height="5.5" fill="#4848e8"/><line x1="769.5" y1="202.4" x2="769.5" y2="254.4" stroke="#8c1212" stroke-width="1.15"/><circle cx="769.5" cy="228.4" r="14.2" fill="#140404" stroke="#2c0808" stroke-width="1.3"/><line x1="769.5" y1="214.4" x2="769.5" y2="242.4" stroke="#6c1018" stroke-width="1.1"/><path d="M762.25 224.4h14.500l-7.250 10zM763 234.4h13" fill="none" stroke="#6c1018" stroke-width="1.1"/><text x="792" y="225.6" font-size="14.8" fill="#080808">D2</text><text x="792" y="239.6" font-size="9.2" fill="#080808">Off</text><line x1="769.4" y1="264.5" x2="769.4" y2="276.5" stroke="#8c1212" stroke-width="1.15"/><line x1="769.4" y1="313" x2="769.4" y2="325" stroke="#8c1212" stroke-width="1.15"/><rect x="764.4" y="276.5" width="10" height="36.5" fill="#cdc9b2" stroke="#801414" stroke-width="1.15"/><text x="781.6" y="290" font-size="14.8" fill="#080808">R4</text><text x="781.6" y="303.8" font-size="9.3" fill="#080808">1k</text><line x1="769.4" y1="374" x2="769.4" y2="386" stroke="#8c1212" stroke-width="1.15"/><line x1="769.4" y1="423" x2="769.4" y2="435" stroke="#8c1212" stroke-width="1.15"/><rect x="764.4" y="386" width="10" height="37" fill="#cdc9b2" stroke="#801414" stroke-width="1.15"/><text x="781.6" y="399.5" font-size="14.8" fill="#080808">R3</text><text x="781.6" y="413.3" font-size="9.3" fill="#080808">1k</text><line x1="769.5" y1="446.5" x2="769.5" y2="498.5" stroke="#8c1212" stroke-width="1.15"/><circle cx="769.5" cy="472.5" r="14.2" fill="#84780c" stroke="#8c3010" stroke-width="1.3"/><line x1="769.5" y1="458.5" x2="769.5" y2="486.5" stroke="#8c2010" stroke-width="1.1"/><path d="M762.25 468.5h14.500l-7.250 10zM763 478.5h13" fill="none" stroke="#8c2010" stroke-width="1.1"/><text x="792" y="469.7" font-size="14.8" fill="#080808">D1</text><text x="792" y="483.7" font-size="9.2" fill="#080808">On</text><rect x="760.4" y="200.3" width="5.5" height="5.5" fill="#f84848"/><rect x="760.4" y="322.3" width="5.5" height="5.5" fill="#f84848"/><rect x="760.4" y="371.2" width="5.5" height="5.5" fill="#f84848"/><rect x="760.4" y="493.3" width="5.5" height="5.5" fill="#4848e8"/><line x1="781" y1="337.5" x2="793.5" y2="337.5" stroke="#8c1212" stroke-width="1.15"/><line x1="830.5" y1="337.5" x2="843" y2="337.5" stroke="#8c1212" stroke-width="1.15"/><rect x="793.5" y="333.5" width="37" height="8.7" fill="#cdc9b2" stroke="#801414" stroke-width="1.15"/><text x="793.3" y="328.9" font-size="14.8" fill="#080808">R2</text><text x="792.7" y="352.7" font-size="9.4" fill="#080808" textLength="17.3" lengthAdjust="spacingAndGlyphs">300</text><rect x="778" y="328.4" width="5.5" height="5.5" fill="#f84848"/><line x1="720.5" y1="405" x2="720.5" y2="417.5" stroke="#8c1212" stroke-width="1.15"/><line x1="720.5" y1="453.5" x2="720.5" y2="466" stroke="#8c1212" stroke-width="1.15"/><rect x="715.2" y="417.5" width="10.4" height="36" fill="#cdc9b2" stroke="#801414" stroke-width="1.15"/><text x="0" y="0" font-size="6.5" fill="#c01818" font-weight="bold" textLength="13" lengthAdjust="spacingAndGlyphs" transform="translate(722.800 442) rotate(-90)">50%</text><path d="M698 435.700H714M710.500 432.500L714.500 435.700L710.500 438.900" fill="none" stroke="#901818" stroke-width="1.2"/><circle cx="735.5" cy="422.6" r="4.2" fill="#a00c0c" stroke="#600808" stroke-width="0.8"/><circle cx="735.5" cy="449.5" r="4.2" fill="#a00c0c" stroke="#600808" stroke-width="0.8"/><path d="M735.500 420.200v4M735.500 447.500v4" fill="none" stroke="#e04040" stroke-width="0.9"/><text x="732.7" y="437.7" font-size="9.3" fill="#080808" textLength="15.6" lengthAdjust="spacingAndGlyphs">10k</text><rect x="693.4" y="438.1" width="5.5" height="5.5" fill="#8c8c8c"/><rect x="711.5" y="395.7" width="5.5" height="5.5" fill="#f84848"/><rect x="711.5" y="469.1" width="5.5" height="5.5" fill="#4848e8"/><rect x="939.5" y="325.5" width="110" height="97.5" fill="#c9c9a9" stroke="#801414" stroke-width="1.15"/><line x1="915" y1="337.4" x2="939.5" y2="337.4" stroke="#8c1212" stroke-width="1.15"/><text x="945.3" y="340.6" font-size="9" fill="#080808">A</text><line x1="915" y1="362.05" x2="939.5" y2="362.05" stroke="#8c1212" stroke-width="1.15"/><text x="945.3" y="365.25" font-size="9" fill="#080808">B</text><line x1="915" y1="386.7" x2="939.5" y2="386.7" stroke="#8c1212" stroke-width="1.15"/><text x="945.3" y="389.9" font-size="9" fill="#080808">C</text><line x1="915" y1="411.35" x2="939.5" y2="411.35" stroke="#8c1212" stroke-width="1.15"/><text x="945.3" y="414.55" font-size="9" fill="#080808">D</text><rect x="924" y="353.2" width="5.5" height="5.5" fill="#4848e8"/><rect x="969" y="344" width="69" height="61.7" fill="#0e3c0e"/><path d="M975.1 344V405.700M981.2 344V405.700M987.3 344V405.700M993.4 344V405.700M999.5 344V405.700M1005.6 344V405.700M1011.7 344V405.700M1017.8 344V405.700M1023.9 344V405.700M1030 344V405.700M1036.1 344V405.700M969 350.15H1038M969 356.3H1038M969 362.45H1038M969 368.6H1038M969 374.75H1038M969 380.9H1038M969 387.05H1038M969 393.2H1038M969 399.35H1038" fill="none" stroke="#041804" stroke-width="0.9" opacity="0.8"/><path d="M969 356.200H976.4v-7.500H982.3v7.500H988.5v-7.500H994.4v7.500H1000.6v-7.500H1006.5v7.500H1012.7v-7.500H1018.6v7.500H1024.8v-7.500H1030.7v7.500H1038" fill="none" stroke="#e4f040" stroke-width="1.3"/><path d="M969 369L974 364.500L980.2 370L986.3 364.500L992.5 370L998.6 364.500L1004.8 370L1010.9 364.500L1017.1 370L1023.2 364.500L1029.4 370L1035.5 364.500L1041.7 370" fill="none" stroke="#2034b4" stroke-width="1.7" opacity="0.8" clip-path="url(#ms)"/><path d="M969 386.600H976.4v-7.500H982.3v7.500H988.5v-7.500H994.4v7.500H1000.6v-7.500H1006.5v7.500H1012.7v-7.500H1018.6v7.500H1024.8v-7.500H1030.7v7.500H1038" fill="none" stroke="#cc3018" stroke-width="1.5"/><path d="M969 396.500L972.600 394L978.9 398.700L985.1 394L991.4 398.700L997.6 394L1003.9 398.700L1010.1 394L1016.4 398.700L1022.6 394L1028.9 398.700L1035.1 394L1041.4 398.700" fill="none" stroke="#40d850" stroke-width="1.1" clip-path="url(#ms)"/><rect x="155.5" y="78.5" width="1520" height="884" fill="none" stroke="#000" stroke-width="1"/></svg></div>
<div id="scope" style="position:absolute;left:813px;top:500px;width:696px;height:448px;overflow:hidden;will-change:transform;"><svg width="696" height="448" viewBox="813 500 696 448" style="position:absolute;left:0;top:0;display:block" font-family="Liberation Sans, sans-serif"><defs><linearGradient id="wt" x1="0" y1="0" x2="0" y2="1"><stop offset="0" stop-color="#a8a4c4"/><stop offset="0.11" stop-color="#a8a4c4"/><stop offset="0.33" stop-color="#b4b8c8"/><stop offset="0.55" stop-color="#c8ccd8"/><stop offset="0.67" stop-color="#d4d8e0"/><stop offset="0.78" stop-color="#e8e8f0"/><stop offset="0.86" stop-color="#fcfcfe"/><stop offset="1" stop-color="#f8f8f8"/></linearGradient><linearGradient id="gv" x1="0" y1="0" x2="0" y2="1"><stop offset="0" stop-color="#4c4c4c"/><stop offset="0.25" stop-color="#909090"/><stop offset="0.47" stop-color="#fff"/><stop offset="0.53" stop-color="#fff"/><stop offset="0.75" stop-color="#909090"/><stop offset="1" stop-color="#505050"/></linearGradient><linearGradient id="gh" x1="0" y1="0" x2="1" y2="0"><stop offset="0" stop-color="#4c4c4c"/><stop offset="0.25" stop-color="#909090"/><stop offset="0.47" stop-color="#fff"/><stop offset="0.53" stop-color="#fff"/><stop offset="0.75" stop-color="#909090"/><stop offset="1" stop-color="#505050"/></linearGradient><radialGradient id="bd" cx="0.4" cy="0.35" r="0.75"><stop offset="0" stop-color="#a0a0a0"/><stop offset="0.6" stop-color="#707070"/><stop offset="1" stop-color="#3c3c3c"/></radialGradient><radialGradient id="bp" cx="0.4" cy="0.35" r="0.75"><stop offset="0" stop-color="#fff"/><stop offset="0.5" stop-color="#fcd8dc"/><stop offset="1" stop-color="#f0a8b0"/></radialGradient><radialGradient id="ko" cx="0.36" cy="0.32" r="0.85"><stop offset="0" stop-color="#dedede"/><stop offset="0.45" stop-color="#b6b6b6"/><stop offset="0.8" stop-color="#8e8e8e"/><stop offset="1" stop-color="#646464"/></radialGradient><linearGradient id="ki" x1="0.2" y1="0.1" x2="0.8" y2="0.9"><stop offset="0" stop-color="#8c8c8c"/><stop offset="0.3" stop-color="#c4c4c4"/><stop offset="0.48" stop-color="#fdfdfd"/><stop offset="0.62" stop-color="#b0b0b0"/><stop offset="1" stop-color="#d0d0d0"/></linearGradient><linearGradient id="kn" x1="0" y1="0" x2="1" y2="0"><stop offset="0" stop-color="#f4f4f4"/><stop offset="1" stop-color="#b8b8b8"/></linearGradient></defs><rect x="813" y="500" width="694.5" height="447.5" fill="#b4b4cc"/><rect x="813.5" y="500.5" width="693.5" height="446.5" fill="none" stroke="#686880" stroke-width="1"/><rect x="814.5" y="501.5" width="691.5" height="444.5" fill="none" stroke="#dcd8f4" stroke-width="1"/><rect x="814" y="946.5" width="693.5" height="1" fill="#e4e4f0"/><rect x="1506.5" y="501" width="1" height="446.5" fill="#e4e4f0"/><rect x="815" y="502" width="691" height="18" fill="url(#wt)"/><text x="815.5" y="515.7" font-size="11" fill="#000" font-weight="bold" textLength="107.5" lengthAdjust="spacingAndGlyphs">Digital Oscilloscope</text><rect x="1490" y="505.2" width="12.8" height="12.4" fill="#f07880" stroke="#e05058" stroke-width="1" rx="1"/><path d="M1493 508l6.800 6.800M1499.800 508l-6.800 6.800" fill="none" stroke="#fdf0e8" stroke-width="2"/><rect x="815" y="520.5" width="691" height="425" fill="#b0b0b0"/><rect x="816" y="943.9" width="690" height="1.5" fill="#101028"/><rect x="815" y="520" width="691" height="1" fill="#9c9ca4"/><rect x="815" y="521" width="691" height="1" fill="#f0f0f0"/><rect x="816" y="522" width="406" height="405" fill="#000"/><rect x="818" y="523" width="403" height="1" fill="#a4aca4"/><rect x="818" y="523" width="1" height="403" fill="#a4aca4"/><rect x="819" y="524" width="402" height="402" fill="#000"/><path d="M839.5 524V926M859.5 524V926M879.5 524V926M899.5 524V926M919.5 524V926M939.5 524V926M959.5 524V926M979.5 524V926M999.5 524V926M1019.5 524V926M1039.5 524V926M1059.5 524V926M1079.5 524V926M1099.5 524V926M1119.5 524V926M1139.5 524V926M1159.5 524V926M1179.5 524V926M1199.5 524V926M1219.5 524V926M819 544.5H1221M819 564.5H1221M819 584.5H1221M819 604.5H1221M819 624.5H1221M819 644.5H1221M819 664.5H1221M819 684.5H1221M819 704.5H1221M819 724.5H1221M819 744.5H1221M819 764.5H1221M819 784.5H1221M819 804.5H1221M819 824.5H1221M819 844.5H1221M819 864.5H1221M819 884.5H1221M819 904.5H1221M819 924.5H1221" fill="none" stroke="#1a4220" stroke-width="1"/><rect x="1220.7" y="522" width="1.5" height="405" fill="#f4f8f4"/><rect x="1222.4" y="521" width="1.1" height="424" fill="#0c0c0c"/><rect x="818" y="925.2" width="404.5" height="1.2" fill="#d4e4d4"/><rect x="817" y="926.4" width="405.5" height="1.1" fill="#080808"/><polyline points="819,809.99 820,803.34 821,796.66 822,790.01 823,783.42 824,776.93 825,770.58 826,764.41 827,758.47 828,752.78 829,747.38 830,742.3 831,737.58 832,733.25 833,729.33 834,725.84 835,722.81 836,720.25 837,718.19 838,716.63 839,715.59 840,715.07 841,715.07 842,715.59 843,716.63 844,718.19 845,720.25 846,722.81 847,725.84 848,729.33 849,733.25 850,737.58 851,742.3 852,747.38 853,752.78 854,758.47 855,764.41 856,770.58 857,776.93 858,783.42 859,790.01 860,796.66 861,803.34 862,809.99 863,816.58 864,823.07 865,829.42 866,835.59 867,841.53 868,847.22 869,852.62 870,857.7 871,862.42 872,866.75 873,870.67 874,874.16 875,877.19 876,879.75 877,881.81 878,883.37 879,884.41 880,884.93 881,884.93 882,884.41 883,883.37 884,881.81 885,879.75 886,877.19 887,874.16 888,870.67 889,866.75 890,862.42 891,857.7 892,852.62 893,847.22 894,841.53 895,835.59 896,829.42 897,823.07 898,816.58 899,809.99 900,803.34 901,796.66 902,790.01 903,783.42 904,776.93 905,770.58 906,764.41 907,758.47 908,752.78 909,747.38 910,742.3 911,737.58 912,733.25 913,729.33 914,725.84 915,722.81 916,720.25 917,718.19 918,716.63 919,715.59 920,715.07 921,715.07 922,715.59 923,716.63 924,718.19 925,720.25 926,722.81 927,725.84 928,729.33 929,733.25 930,737.58 931,742.3 932,747.38 933,752.78 934,758.47 935,764.41 936,770.58 937,776.93 938,783.42 939,790.01 940,796.66 941,803.34 942,809.99 943,816.58 944,823.07 945,829.42 946,835.59 947,841.53 948,847.22 949,852.62 950,857.7 951,862.42 952,866.75 953,870.67 954,874.16 955,877.19 956,879.75 957,881.81 958,883.37 959,884.41 960,884.93 961,884.93 962,884.41 963,883.37 964,881.81 965,879.75 966,877.19 967,874.16 968,870.67 969,866.75 970,862.42 971,857.7 972,852.62 973,847.22 974,841.53 975,835.59 976,829.42 977,823.07 978,816.58 979,809.99 980,803.34 981,796.66 982,790.01 983,783.42 984,776.93 985,770.58 986,764.41 987,758.47 988,752.78 989,747.38 990,742.3 991,737.58 992,733.25 993,729.33 994,725.84 995,722.81 996,720.25 997,718.19 998,716.63 999,715.59 1000,715.07 1001,715.07 1002,715.59 1003,716.63 1004,718.19 1005,720.25 1006,722.81 1007,725.84 1008,729.33 1009,733.25 1010,737.58 1011,742.3 1012,747.38 1013,752.78 1014,758.47 1015,764.41 1016,770.58 1017,776.93 1018,783.42 1019,790.01 1020,796.66 1021,803.34 1022,809.99 1023,816.58 1024,823.07 1025,829.42 1026,835.59 1027,841.53 1028,847.22 1029,852.62 1030,857.7 1031,862.42 1032,866.75 1033,870.67 1034,874.16 1035,877.19 1036,879.75 1037,881.81 1038,883.37 1039,884.41 1040,884.93 1041,884.93 1042,884.41 1043,883.37 1044,881.81 1045,879.75 1046,877.19 1047,874.16 1048,870.67 1049,866.75 1050,862.42 1051,857.7 1052,852.62 1053,847.22 1054,841.53 1055,835.59 1056,829.42 1057,823.07 1058,816.58 1059,809.99 1060,803.34 1061,796.66 1062,790.01 1063,783.42 1064,776.93 1065,770.58 1066,764.41 1067,758.47 1068,752.78 1069,747.38 1070,742.3 1071,737.58 1072,733.25 1073,729.33 1074,725.84 1075,722.81 1076,720.25 1077,718.19 1078,716.63 1079,715.59 1080,715.07 1081,715.07 1082,715.59 1083,716.63 1084,718.19 1085,720.25 1086,722.81 1087,725.84 1088,729.33 1089,733.25 1090,737.58 1091,742.3 1092,747.38 1093,752.78 1094,758.47 1095,764.41 1096,770.58 1097,776.93 1098,783.42 1099,790.01 1100,796.66 1101,803.34 1102,809.99 1103,816.58 1104,823.07 1105,829.42 1106,835.59 1107,841.53 1108,847.22 1109,852.62 1110,857.7 1111,862.42 1112,866.75 1113,870.67 1114,874.16 1115,877.19 1116,879.75 1117,881.81 1118,883.37 1119,884.41 1120,884.93 1121,884.93 1122,884.41 1123,883.37 1124,881.81 1125,879.75 1126,877.19 1127,874.16 1128,870.67 1129,866.75 1130,862.42 1131,857.7 1132,852.62 1133,847.22 1134,841.53 1135,835.59 1136,829.42 1137,823.07 1138,816.58 1139,809.99 1140,803.34 1141,796.66 1142,790.01 1143,783.42 1144,776.93 1145,770.58 1146,764.41 1147,758.47 1148,752.78 1149,747.38 1150,742.3 1151,737.58 1152,733.25 1153,729.33 1154,725.84 1155,722.81 1156,720.25 1157,718.19 1158,716.63 1159,715.59 1160,715.07 1161,715.07 1162,715.59 1163,716.63 1164,718.19 1165,720.25 1166,722.81 1167,725.84 1168,729.33 1169,733.25 1170,737.58 1171,742.3 1172,747.38 1173,752.78 1174,758.47 1175,764.41 1176,770.58 1177,776.93 1178,783.42 1179,790.01 1180,796.66 1181,803.34 1182,809.99 1183,816.58 1184,823.07 1185,829.42 1186,835.59 1187,841.53 1188,847.22 1189,852.62 1190,857.7 1191,862.42 1192,866.75 1193,870.67 1194,874.16 1195,877.19 1196,879.75 1197,881.81 1198,883.37 1199,884.41 1200,884.93 1201,884.93 1202,884.41 1203,883.37 1204,881.81 1205,879.75 1206,877.19 1207,874.16 1208,870.67 1209,866.75 1210,862.42 1211,857.7 1212,852.62 1213,847.22 1214,841.53 1215,835.59 1216,829.42 1217,823.07 1218,816.58 1219,809.99 1220,803.34" fill="none" stroke="#4cb8d8" stroke-width="1.1"/><path d="M819 724.500H1221M830.5 724.500V824.500M870.5 724.500V824.500M910.5 724.500V824.500M950.5 724.500V824.500M1031.3 724.500V824.500M1110.5 724.500V824.500M1151.3 724.500V824.500M1190.5 724.500V824.500" fill="none" stroke="#f0e838" stroke-width="1.1"/><path d="M1031.300 724.500V775M1151.300 724.500V775" fill="none" stroke="#f0e810" stroke-width="2"/><rect x="818" y="927.5" width="404" height="17" fill="#f4f4f8"/><rect x="818" y="927.5" width="404" height="1" fill="#606060"/><rect x="818" y="927.5" width="1" height="17" fill="#606060"/><rect x="818" y="943.5" width="404" height="1" fill="#fff"/><rect x="819" y="928.5" width="15" height="15" fill="#ececf0" stroke="#b0b0b8" stroke-width="1"/><rect x="1205.5" y="928.5" width="15.5" height="15" fill="#ececf0" stroke="#b0b0b8" stroke-width="1"/><rect x="1158.5" y="928.5" width="16.5" height="15" fill="#dcdce2" stroke="#b8b8c0" stroke-width="1"/><polygon points="824,936 828.5,932 828.5,940" fill="#000"/><polygon points="1216.5,936 1212,932 1212,940" fill="#000"/><rect x="1504.3" y="521" width="1.7" height="424.4" fill="#101028"/><rect x="1223.5" y="521" width="93" height="26" fill="#aaaaaa"/><rect x="1223.5" y="521" width="93" height="1" fill="#e4e4e4"/><rect x="1223.5" y="521" width="1" height="26" fill="#e4e4e4"/><rect x="1223.5" y="546.5" width="93" height="1.3" fill="#181818"/><rect x="1315.5" y="521" width="1.3" height="26" fill="#383838"/><text x="1247" y="540" font-size="13.2" fill="#e8949c" font-weight="bold" textLength="39.7" lengthAdjust="spacingAndGlyphs">Trigger</text><rect x="1223.5" y="548.5" width="93" height="184" fill="#aaaaaa"/><rect x="1223.5" y="548.5" width="93" height="1" fill="#e4e4e4"/><rect x="1223.5" y="548.5" width="1" height="184" fill="#e4e4e4"/><rect x="1223.5" y="732" width="93" height="1.3" fill="#181818"/><rect x="1315.5" y="548.5" width="1.3" height="184" fill="#383838"/><text x="1243.4" y="557.8" font-size="9.2" fill="#242424" textLength="21.6" lengthAdjust="spacingAndGlyphs">Level</text><rect x="1234.7" y="560.7" width="39.3" height="79.9" fill="#aaaaaa" stroke="#101010" stroke-width="1.1"/><rect x="1235.7" y="639" width="37.8" height="1" fill="#e8e8e8"/><rect x="1272.4" y="561.7" width="1" height="78.4" fill="#e8e8e8"/><rect x="1242.1" y="563.2" width="25" height="74.9" fill="url(#gv)"/><rect x="1241.1" y="563.2" width="1" height="74.9" fill="#f0f0f0"/><rect x="1267.1" y="563.2" width="1.2" height="74.9" fill="#282828"/><path d="M1242.1 566.76h2.8M1267.1 566.76h-2.8M1242.1 570.84h2.8M1267.1 570.84h-2.8M1242.1 574.92h2.8M1267.1 574.92h-2.8M1242.1 579h5M1267.1 579h-5M1242.1 583.08h2.8M1267.1 583.08h-2.8M1242.1 587.16h2.8M1267.1 587.16h-2.8M1242.1 591.24h2.8M1267.1 591.24h-2.8M1242.1 595.32h2.8M1267.1 595.32h-2.8M1242.1 599.4h5M1267.1 599.4h-5M1242.1 603.48h2.8M1267.1 603.48h-2.8M1242.1 607.56h2.8M1267.1 607.56h-2.8M1242.1 611.64h2.8M1267.1 611.64h-2.8M1242.1 615.72h2.8M1267.1 615.72h-2.8M1242.1 619.8h5M1267.1 619.8h-5M1242.1 623.88h2.8M1267.1 623.88h-2.8M1242.1 627.96h2.8M1267.1 627.96h-2.8M1242.1 632.04h2.8M1267.1 632.04h-2.8M1242.1 636.12h2.8M1267.1 636.12h-2.8" fill="none" stroke="#303030" stroke-width="0.8" opacity="0.75"/><text x="1248" y="582" font-size="9.6" fill="#080808" textLength="12.4" lengthAdjust="spacingAndGlyphs">-10</text><text x="1254.6" y="602.4" font-size="9.6" fill="#080808" text-anchor="middle">0</text><text x="1249.3" y="622.4" font-size="9.6" fill="#080808" textLength="9.8" lengthAdjust="spacingAndGlyphs">10</text><polygon points="1236.2,594.5 1236.2,603.5 1241.1,599" fill="#e81010"/><polygon points="1272.5,594.5 1272.5,603.5 1268.3,599" fill="#e81010"/><path d="M1229.8 587.5l3.200 5.500h-2.200v10h2.200l-3.200 5.500l-3.200 -5.500h2.200v-10h-2.200z" fill="#e8949c"/><text x="1297.2" y="563.5" font-size="9.2" fill="#242424" text-anchor="end">AC</text><text x="1297.2" y="577.4" font-size="9.2" fill="#242424" text-anchor="end">DC</text><rect x="1300.3" y="550.4" width="14.3" height="32.6" fill="#aaaaaa"/><rect x="1300.3" y="550.4" width="14.3" height="1.2" fill="#303030"/><rect x="1300.3" y="550.4" width="1.2" height="32.6" fill="#303030"/><rect x="1300.3" y="581.8" width="14.3" height="1.2" fill="#f4f4f4"/><rect x="1313.4" y="550.4" width="1.2" height="32.6" fill="#f4f4f4"/><rect x="1306.25" y="555.9" width="2.4" height="21.6" fill="#080808"/><rect x="1302.6" y="567.5" width="9.7" height="13.5" fill="url(#kn)" stroke="#505050" stroke-width="0.8"/><rect x="1303.5" y="569.8" width="8" height="1" fill="#585858"/><rect x="1303.5" y="572.15" width="8" height="1" fill="#585858"/><rect x="1303.5" y="574.5" width="8" height="1" fill="#585858"/><rect x="1303.5" y="576.85" width="8" height="1" fill="#585858"/><rect x="1303.5" y="579.2" width="8" height="1" fill="#585858"/><rect x="1300.3" y="595.4" width="14.3" height="32.6" fill="#aaaaaa"/><rect x="1300.3" y="595.4" width="14.3" height="1.2" fill="#303030"/><rect x="1300.3" y="595.4" width="1.2" height="32.6" fill="#303030"/><rect x="1300.3" y="626.8" width="14.3" height="1.2" fill="#f4f4f4"/><rect x="1313.4" y="595.4" width="1.2" height="32.6" fill="#f4f4f4"/><rect x="1306.25" y="600.9" width="2.4" height="21.6" fill="#080808"/><rect x="1302.6" y="597.2" width="9.7" height="13.6" fill="url(#kn)" stroke="#505050" stroke-width="0.8"/><rect x="1303.5" y="599.5" width="8" height="1" fill="#585858"/><rect x="1303.5" y="601.85" width="8" height="1" fill="#585858"/><rect x="1303.5" y="604.2" width="8" height="1" fill="#585858"/><rect x="1303.5" y="606.55" width="8" height="1" fill="#585858"/><rect x="1303.5" y="608.9" width="8" height="1" fill="#585858"/><path d="M1296.300 599.800h-2.800v9.600h-4.300M1289.200 614.200h4.300v10h2.800" fill="none" stroke="#383838" stroke-width="1.1"/><text x="1297.3" y="651.7" font-size="9.2" fill="#242424" text-anchor="end">Auto</text><rect x="1300" y="641" width="14.6" height="14.4" fill="url(#bp)"/><rect x="1300" y="641" width="14.6" height="1" fill="#fff"/><rect x="1300" y="641" width="1" height="14.4" fill="#fff"/><rect x="1300" y="654.4" width="14.6" height="1" fill="#d89098"/><rect x="1313.6" y="641" width="1" height="14.4" fill="#d89098"/><text x="1297.5" y="666.8" font-size="9.2" fill="#242424" textLength="38" lengthAdjust="spacingAndGlyphs" text-anchor="end">One-Shot</text><rect x="1300" y="657.5" width="14.6" height="14" fill="url(#bd)"/><rect x="1300" y="657.5" width="14.6" height="1" fill="#c8c8c8"/><rect x="1300" y="657.5" width="1" height="14" fill="#c8c8c8"/><rect x="1300" y="670.2" width="14.6" height="1.3" fill="#202020"/><rect x="1313.3" y="657.5" width="1.3" height="14" fill="#202020"/><text x="1297.5" y="682.6" font-size="9.2" fill="#242424" textLength="35" lengthAdjust="spacingAndGlyphs" text-anchor="end">Cursors</text><rect x="1300" y="673.3" width="14.6" height="14.3" fill="url(#bd)"/><rect x="1300" y="673.3" width="14.6" height="1" fill="#c8c8c8"/><rect x="1300" y="673.3" width="1" height="14.3" fill="#c8c8c8"/><rect x="1300" y="686.3" width="14.6" height="1.3" fill="#202020"/><rect x="1313.3" y="673.3" width="1.3" height="14.3" fill="#202020"/><text x="1269.7" y="702.4" font-size="9.2" fill="#242424" text-anchor="middle">Source</text><text x="1249.8" y="713.4" font-size="8.6" fill="#f0f048" font-weight="bold" text-anchor="middle">A</text><text x="1264" y="713.4" font-size="8.6" fill="#3898e0" font-weight="bold" text-anchor="middle">B</text><text x="1278.6" y="713.4" font-size="8.6" fill="#d83898" font-weight="bold" text-anchor="middle">C</text><text x="1292.9" y="713.4" font-size="8.6" fill="#28a858" font-weight="bold" text-anchor="middle">D</text><rect x="1238.4" y="716.4" width="63.1" height="13.8" fill="#aaaaaa"/><rect x="1238.4" y="716.4" width="63.1" height="1.2" fill="#303030"/><rect x="1238.4" y="716.4" width="1.2" height="13.8" fill="#303030"/><rect x="1238.4" y="729" width="63.1" height="1.2" fill="#f4f4f4"/><rect x="1300.3" y="716.4" width="1.2" height="13.8" fill="#f4f4f4"/><rect x="1254.8" y="722.1" width="40.2" height="2.4" fill="#080808"/><rect x="1240" y="718.6" width="14.8" height="9.6" fill="url(#kn)" stroke="#505050" stroke-width="0.8"/><rect x="1243" y="719.6" width="1" height="7.8" fill="#484848"/><rect x="1245.6" y="719.6" width="1" height="7.8" fill="#484848"/><rect x="1248.2" y="719.6" width="1" height="7.8" fill="#484848"/><rect x="1250.8" y="719.6" width="1" height="7.8" fill="#484848"/><rect x="1317.5" y="521" width="93" height="26" fill="#aaaaaa"/><rect x="1317.5" y="521" width="93" height="1" fill="#e4e4e4"/><rect x="1317.5" y="521" width="1" height="26" fill="#e4e4e4"/><rect x="1317.5" y="546.5" width="93" height="1.3" fill="#181818"/><rect x="1409.5" y="521" width="1.3" height="26" fill="#383838"/><text x="1335" y="540" font-size="13.2" fill="#f4f448" font-weight="bold" textLength="56.4" lengthAdjust="spacingAndGlyphs">Channel A</text><rect x="1317.5" y="548.5" width="93" height="184" fill="#aaaaaa"/><rect x="1317.5" y="548.5" width="93" height="1" fill="#e4e4e4"/><rect x="1317.5" y="548.5" width="1" height="184" fill="#e4e4e4"/><rect x="1317.5" y="732" width="93" height="1.3" fill="#181818"/><rect x="1409.5" y="548.5" width="1.3" height="184" fill="#383838"/><text x="1331.3" y="557.8" font-size="9.2" fill="#242424" textLength="32" lengthAdjust="spacingAndGlyphs">Position</text><rect x="1328.9" y="560.7" width="38.7" height="79.9" fill="#aaaaaa" stroke="#101010" stroke-width="1.1"/><rect x="1329.9" y="639" width="37.2" height="1" fill="#e8e8e8"/><rect x="1366" y="561.7" width="1" height="78.4" fill="#e8e8e8"/><rect x="1336.3" y="563.2" width="24.4" height="74.9" fill="url(#gv)"/><rect x="1335.3" y="563.2" width="1" height="74.9" fill="#f0f0f0"/><rect x="1360.7" y="563.2" width="1.2" height="74.9" fill="#282828"/><path d="M1336.3 566.76h2.8M1360.7 566.76h-2.8M1336.3 570.84h2.8M1360.7 570.84h-2.8M1336.3 574.92h2.8M1360.7 574.92h-2.8M1336.3 579h5M1360.7 579h-5M1336.3 583.08h2.8M1360.7 583.08h-2.8M1336.3 587.16h2.8M1360.7 587.16h-2.8M1336.3 591.24h2.8M1360.7 591.24h-2.8M1336.3 595.32h2.8M1360.7 595.32h-2.8M1336.3 599.4h5M1360.7 599.4h-5M1336.3 603.48h2.8M1360.7 603.48h-2.8M1336.3 607.56h2.8M1360.7 607.56h-2.8M1336.3 611.64h2.8M1360.7 611.64h-2.8M1336.3 615.72h2.8M1360.7 615.72h-2.8M1336.3 619.8h5M1360.7 619.8h-5M1336.3 623.88h2.8M1360.7 623.88h-2.8M1336.3 627.96h2.8M1360.7 627.96h-2.8M1336.3 632.04h2.8M1360.7 632.04h-2.8M1336.3 636.12h2.8M1360.7 636.12h-2.8" fill="none" stroke="#303030" stroke-width="0.8" opacity="0.75"/><text x="1341.9" y="582" font-size="9.6" fill="#080808" textLength="12.4" lengthAdjust="spacingAndGlyphs">-10</text><text x="1348.5" y="602.4" font-size="9.6" fill="#080808" text-anchor="middle">0</text><text x="1343.2" y="622.4" font-size="9.6" fill="#080808" textLength="9.8" lengthAdjust="spacingAndGlyphs">10</text><polygon points="1330.4,594.5 1330.4,603.5 1335.3,599" fill="#e81010"/><polygon points="1366.1,594.5 1366.1,603.5 1361.9,599" fill="#e81010"/><path d="M1323.3 587.5l3.200 5.500h-2.200v10h2.200l-3.200 5.500l-3.200 -5.500h2.200v-10h-2.200z" fill="#f4f448"/><text x="1392" y="563.5" font-size="9.2" fill="#242424" text-anchor="end">AC</text><text x="1392" y="577.55" font-size="9.2" fill="#242424" text-anchor="end">DC</text><text x="1392" y="591.6" font-size="9.2" fill="#242424" text-anchor="end">GND</text><text x="1392" y="605.65" font-size="9.2" fill="#242424" text-anchor="end">OFF</text><rect x="1394.4" y="550.4" width="14.3" height="62.9" fill="#aaaaaa"/><rect x="1394.4" y="550.4" width="14.3" height="1.2" fill="#303030"/><rect x="1394.4" y="550.4" width="1.2" height="62.9" fill="#303030"/><rect x="1394.4" y="612.1" width="14.3" height="1.2" fill="#f4f4f4"/><rect x="1407.5" y="550.4" width="1.2" height="62.9" fill="#f4f4f4"/><rect x="1400.35" y="555.9" width="2.4" height="51.9" fill="#080808"/><rect x="1396.7" y="552" width="9.7" height="14.3" fill="url(#kn)" stroke="#505050" stroke-width="0.8"/><rect x="1397.6" y="554.3" width="8" height="1" fill="#585858"/><rect x="1397.6" y="556.65" width="8" height="1" fill="#585858"/><rect x="1397.6" y="559" width="8" height="1" fill="#585858"/><rect x="1397.6" y="561.35" width="8" height="1" fill="#585858"/><rect x="1397.6" y="563.7" width="8" height="1" fill="#585858"/><text x="1392" y="624.4" font-size="9.2" fill="#242424" textLength="22.3" lengthAdjust="spacingAndGlyphs" text-anchor="end">Invert</text><rect x="1394.4" y="615.8" width="14.3" height="13" fill="url(#bd)"/><rect x="1394.4" y="615.8" width="14.3" height="1" fill="#c8c8c8"/><rect x="1394.4" y="615.8" width="1" height="13" fill="#c8c8c8"/><rect x="1394.4" y="627.5" width="14.3" height="1.3" fill="#202020"/><rect x="1407.4" y="615.8" width="1.3" height="13" fill="#202020"/><text x="1392" y="641.1" font-size="9.2" fill="#242424" text-anchor="end">A+B</text><rect x="1394.4" y="631.2" width="14.3" height="13.8" fill="url(#bd)"/><rect x="1394.4" y="631.2" width="14.3" height="1" fill="#c8c8c8"/><rect x="1394.4" y="631.2" width="1" height="13.8" fill="#c8c8c8"/><rect x="1394.4" y="643.7" width="14.3" height="1.3" fill="#202020"/><rect x="1407.4" y="631.2" width="1.3" height="13.8" fill="#202020"/><path d="M1320.5 730.2V686.5A44 43.7 0 0 1 1408.5 686.5V730.2H1383.3V708.5H1345.7V730.2Z" fill="#fcfcfc" stroke="#404040" stroke-width="1"/><rect x="1346.2" y="706.5" width="36.6" height="24.2" fill="#aaaaaa"/><path d="M1345.7 730.2V708.5M1383.3 730.2V708.5" fill="none" stroke="#404040" stroke-width="1"/><polygon points="1379.23,660.86 1387.78,648.06 1391.11,650.28 1382.55,663.08" fill="#aaaaaa"/><line x1="1379.23" y1="660.86" x2="1387" y2="649.22" stroke="#404040" stroke-width="0.9"/><line x1="1382.55" y1="663.08" x2="1390.33" y2="651.44" stroke="#404040" stroke-width="0.9"/><text x="1337.21" y="716.29" font-size="7" fill="#242424" text-anchor="middle">20</text><text x="1328.84" y="703.77" font-size="7" fill="#242424" text-anchor="middle">10</text><text x="1325.9" y="689" font-size="7" fill="#242424" text-anchor="middle">5</text><text x="1328.84" y="674.23" font-size="7" fill="#242424" text-anchor="middle">2</text><text x="1337.21" y="661.71" font-size="7" fill="#242424" text-anchor="middle">1</text><text x="1349.77" y="652.97" font-size="7" fill="#242424" text-anchor="middle">0.5</text><text x="1364.5" y="650" font-size="7" fill="#242424" text-anchor="middle">0.2</text><text x="1377.23" y="652.97" font-size="7" fill="#242424" text-anchor="middle">0.1</text><text x="1392.99" y="661.71" font-size="7" fill="#242424" text-anchor="middle">50</text><text x="1400.16" y="674.23" font-size="7" fill="#242424" text-anchor="middle">20</text><text x="1403.1" y="689" font-size="7" fill="#242424" text-anchor="middle">10</text><text x="1400.16" y="703.77" font-size="7" fill="#242424" text-anchor="middle">5</text><text x="1391.79" y="716.29" font-size="7" fill="#242424" text-anchor="middle">2</text><path d="M1343.99 707.01L1340.74 710.26M1337.71 697.6L1333.46 699.36M1335.5 686.5L1330.9 686.5M1337.71 675.4L1333.46 673.64M1343.99 665.99L1340.74 662.74M1353.4 659.71L1351.64 655.46M1364.5 657.5L1364.5 652.9M1375.6 659.71L1377.36 655.46M1385.01 665.99L1388.26 662.74M1391.29 675.4L1395.54 673.64M1393.5 686.5L1398.1 686.5M1391.29 697.6L1395.54 699.36M1385.01 707.01L1388.26 710.26" fill="none" stroke="#303030" stroke-width="0.9"/><circle cx="1365.3" cy="687.7" r="29.6" fill="#585858" opacity="0.55"/><circle cx="1364.5" cy="686.5" r="29.3" fill="url(#ko)"/><circle cx="1365.1" cy="687.5" r="15.6" fill="#484848" opacity="0.5"/><circle cx="1364.5" cy="686.5" r="14.8" fill="url(#ki)" stroke="#8c8c8c" stroke-width="0.7"/><polygon points="1344.6,667.5 1354.2,668.5 1347.3,676.6" fill="#f4f448"/><circle cx="1371.4" cy="694" r="2.6" fill="#f4f448"/><rect x="1347.2" y="717.2" width="35" height="13" fill="#fff"/><rect x="1347.2" y="717.2" width="35" height="1.4" fill="#202020"/><rect x="1347.2" y="717.2" width="1.4" height="13" fill="#202020"/><text x="1349.7" y="726" font-size="9.4" fill="#000058">1</text><text x="1332.3" y="725.9" font-size="9.2" fill="#242424" text-anchor="middle">V</text><text x="1396.3" y="725.9" font-size="9.2" fill="#242424" text-anchor="middle">mV</text><rect x="1411.5" y="521" width="93" height="26" fill="#aaaaaa"/><rect x="1411.5" y="521" width="93" height="1" fill="#e4e4e4"/><rect x="1411.5" y="521" width="1" height="26" fill="#e4e4e4"/><rect x="1411.5" y="546.5" width="93" height="1.3" fill="#181818"/><rect x="1503.5" y="521" width="1.3" height="26" fill="#383838"/><text x="1428.8" y="540" font-size="13.2" fill="#e0287c" font-weight="bold" textLength="56.4" lengthAdjust="spacingAndGlyphs">Channel C</text><rect x="1411.5" y="548.5" width="93" height="184" fill="#aaaaaa"/><rect x="1411.5" y="548.5" width="93" height="1" fill="#e4e4e4"/><rect x="1411.5" y="548.5" width="1" height="184" fill="#e4e4e4"/><rect x="1411.5" y="732" width="93" height="1.3" fill="#181818"/><rect x="1503.5" y="548.5" width="1.3" height="184" fill="#383838"/><text x="1425.3" y="557.8" font-size="9.2" fill="#242424" textLength="32" lengthAdjust="spacingAndGlyphs">Position</text><rect x="1422.9" y="560.7" width="38.7" height="79.9" fill="#aaaaaa" stroke="#101010" stroke-width="1.1"/><rect x="1423.9" y="639" width="37.2" height="1" fill="#e8e8e8"/><rect x="1460" y="561.7" width="1" height="78.4" fill="#e8e8e8"/><rect x="1430.3" y="563.2" width="24.4" height="74.9" fill="url(#gv)"/><rect x="1429.3" y="563.2" width="1" height="74.9" fill="#f0f0f0"/><rect x="1454.7" y="563.2" width="1.2" height="74.9" fill="#282828"/><path d="M1430.3 566.8h5M1454.7 566.8h-5M1430.3 570.76h2.8M1454.7 570.76h-2.8M1430.3 574.72h2.8M1454.7 574.72h-2.8M1430.3 578.68h2.8M1454.7 578.68h-2.8M1430.3 582.64h2.8M1454.7 582.64h-2.8M1430.3 586.6h5M1454.7 586.6h-5M1430.3 590.56h2.8M1454.7 590.56h-2.8M1430.3 594.52h2.8M1454.7 594.52h-2.8M1430.3 598.48h2.8M1454.7 598.48h-2.8M1430.3 602.44h2.8M1454.7 602.44h-2.8M1430.3 606.4h5M1454.7 606.4h-5M1430.3 610.36h2.8M1454.7 610.36h-2.8M1430.3 614.32h2.8M1454.7 614.32h-2.8M1430.3 618.28h2.8M1454.7 618.28h-2.8M1430.3 622.24h2.8M1454.7 622.24h-2.8M1430.3 626.2h5M1454.7 626.2h-5M1430.3 630.16h2.8M1454.7 630.16h-2.8M1430.3 634.12h2.8M1454.7 634.12h-2.8" fill="none" stroke="#303030" stroke-width="0.8" opacity="0.75"/><text x="1433.75" y="569.8" font-size="9.6" fill="#080808" textLength="16.7" lengthAdjust="spacingAndGlyphs">-150</text><text x="1433.75" y="589.6" font-size="9.6" fill="#080808" textLength="16.7" lengthAdjust="spacingAndGlyphs">-140</text><text x="1433.75" y="609.6" font-size="9.6" fill="#080808" textLength="16.7" lengthAdjust="spacingAndGlyphs">-130</text><text x="1433.75" y="629.4" font-size="9.6" fill="#080808" textLength="16.7" lengthAdjust="spacingAndGlyphs">-120</text><polygon points="1424.4,594.5 1424.4,603.5 1429.3,599" fill="#e81010"/><polygon points="1460.1,594.5 1460.1,603.5 1455.9,599" fill="#e81010"/><path d="M1417.3 587.5l3.200 5.500h-2.200v10h2.200l-3.200 5.500l-3.200 -5.500h2.200v-10h-2.200z" fill="#e0287c"/><text x="1486" y="563.5" font-size="9.2" fill="#242424" text-anchor="end">AC</text><text x="1486" y="577.55" font-size="9.2" fill="#242424" text-anchor="end">DC</text><text x="1486" y="591.6" font-size="9.2" fill="#242424" text-anchor="end">GND</text><text x="1486" y="605.65" font-size="9.2" fill="#242424" text-anchor="end">OFF</text><rect x="1488.4" y="550.4" width="14.3" height="62.9" fill="#aaaaaa"/><rect x="1488.4" y="550.4" width="14.3" height="1.2" fill="#303030"/><rect x="1488.4" y="550.4" width="1.2" height="62.9" fill="#303030"/><rect x="1488.4" y="612.1" width="14.3" height="1.2" fill="#f4f4f4"/><rect x="1501.5" y="550.4" width="1.2" height="62.9" fill="#f4f4f4"/><rect x="1494.35" y="555.9" width="2.4" height="51.9" fill="#080808"/><rect x="1490.7" y="596.5" width="9.7" height="14.5" fill="url(#kn)" stroke="#505050" stroke-width="0.8"/><rect x="1491.6" y="598.8" width="8" height="1" fill="#585858"/><rect x="1491.6" y="601.15" width="8" height="1" fill="#585858"/><rect x="1491.6" y="603.5" width="8" height="1" fill="#585858"/><rect x="1491.6" y="605.85" width="8" height="1" fill="#585858"/><rect x="1491.6" y="608.2" width="8" height="1" fill="#585858"/><text x="1486" y="624.4" font-size="9.2" fill="#242424" textLength="22.3" lengthAdjust="spacingAndGlyphs" text-anchor="end">Invert</text><rect x="1488.4" y="615.8" width="14.3" height="13" fill="url(#bd)"/><rect x="1488.4" y="615.8" width="14.3" height="1" fill="#c8c8c8"/><rect x="1488.4" y="615.8" width="1" height="13" fill="#c8c8c8"/><rect x="1488.4" y="627.5" width="14.3" height="1.3" fill="#202020"/><rect x="1501.4" y="615.8" width="1.3" height="13" fill="#202020"/><text x="1486" y="641.1" font-size="9.2" fill="#242424" text-anchor="end">C+D</text><rect x="1488.4" y="631.2" width="14.3" height="13.8" fill="url(#bd)"/><rect x="1488.4" y="631.2" width="14.3" height="1" fill="#c8c8c8"/><rect x="1488.4" y="631.2" width="1" height="13.8" fill="#c8c8c8"/><rect x="1488.4" y="643.7" width="14.3" height="1.3" fill="#202020"/><rect x="1501.4" y="631.2" width="1.3" height="13.8" fill="#202020"/><path d="M1414.5 730.2V686.5A44 43.7 0 0 1 1502.5 686.5V730.2H1477.3V708.5H1439.7V730.2Z" fill="#fcfcfc" stroke="#404040" stroke-width="1"/><rect x="1440.2" y="706.5" width="36.6" height="24.2" fill="#aaaaaa"/><path d="M1439.7 730.2V708.5M1477.3 730.2V708.5" fill="none" stroke="#404040" stroke-width="1"/><polygon points="1473.23,660.86 1481.78,648.06 1485.11,650.28 1476.55,663.08" fill="#aaaaaa"/><line x1="1473.23" y1="660.86" x2="1481" y2="649.22" stroke="#404040" stroke-width="0.9"/><line x1="1476.55" y1="663.08" x2="1484.33" y2="651.44" stroke="#404040" stroke-width="0.9"/><text x="1431.21" y="716.29" font-size="7" fill="#242424" text-anchor="middle">20</text><text x="1422.84" y="703.77" font-size="7" fill="#242424" text-anchor="middle">10</text><text x="1419.9" y="689" font-size="7" fill="#242424" text-anchor="middle">5</text><text x="1422.84" y="674.23" font-size="7" fill="#242424" text-anchor="middle">2</text><text x="1431.21" y="661.71" font-size="7" fill="#242424" text-anchor="middle">1</text><text x="1443.77" y="652.97" font-size="7" fill="#242424" text-anchor="middle">0.5</text><text x="1458.5" y="650" font-size="7" fill="#242424" text-anchor="middle">0.2</text><text x="1471.23" y="652.97" font-size="7" fill="#242424" text-anchor="middle">0.1</text><text x="1486.99" y="661.71" font-size="7" fill="#242424" text-anchor="middle">50</text><text x="1494.16" y="674.23" font-size="7" fill="#242424" text-anchor="middle">20</text><text x="1497.1" y="689" font-size="7" fill="#242424" text-anchor="middle">10</text><text x="1494.16" y="703.77" font-size="7" fill="#242424" text-anchor="middle">5</text><text x="1485.79" y="716.29" font-size="7" fill="#242424" text-anchor="middle">2</text><path d="M1437.99 707.01L1434.74 710.26M1431.71 697.6L1427.46 699.36M1429.5 686.5L1424.9 686.5M1431.71 675.4L1427.46 673.64M1437.99 665.99L1434.74 662.74M1447.4 659.71L1445.64 655.46M1458.5 657.5L1458.5 652.9M1469.6 659.71L1471.36 655.46M1479.01 665.99L1482.26 662.74M1485.29 675.4L1489.54 673.64M1487.5 686.5L1492.1 686.5M1485.29 697.6L1489.54 699.36M1479.01 707.01L1482.26 710.26" fill="none" stroke="#303030" stroke-width="0.9"/><circle cx="1459.3" cy="687.7" r="29.6" fill="#585858" opacity="0.55"/><circle cx="1458.5" cy="686.5" r="29.3" fill="url(#ko)"/><circle cx="1459.1" cy="687.5" r="15.6" fill="#484848" opacity="0.5"/><circle cx="1458.5" cy="686.5" r="14.8" fill="url(#ki)" stroke="#8c8c8c" stroke-width="0.7"/><polygon points="1438.5,667.5 1448.2,670.8 1442.5,677.3" fill="#e0287c"/><polygon points="1461.5,693 1467.5,690.5 1467.5,696.5" fill="#e0287c"/><rect x="1441.2" y="717.2" width="35" height="13" fill="#fff"/><rect x="1441.2" y="717.2" width="35" height="1.4" fill="#202020"/><rect x="1441.2" y="717.2" width="1.4" height="13" fill="#202020"/><text x="1443.7" y="726" font-size="9.4" fill="#000058">1</text><text x="1426.3" y="725.9" font-size="9.2" fill="#242424" text-anchor="middle">V</text><text x="1490.3" y="725.9" font-size="9.2" fill="#242424" text-anchor="middle">mV</text><rect x="1223.5" y="733" width="93" height="26" fill="#aaaaaa"/><rect x="1223.5" y="733" width="93" height="1" fill="#e4e4e4"/><rect x="1223.5" y="733" width="1" height="26" fill="#e4e4e4"/><rect x="1223.5" y="758.5" width="93" height="1.3" fill="#181818"/><rect x="1315.5" y="733" width="1.3" height="26" fill="#383838"/><text x="1237.8" y="752" font-size="13.2" fill="#e88c3c" font-weight="bold" textLength="59.4" lengthAdjust="spacingAndGlyphs">Horizontal</text><rect x="1223.5" y="760.5" width="93" height="184" fill="#aaaaaa"/><rect x="1223.5" y="760.5" width="93" height="1" fill="#e4e4e4"/><rect x="1223.5" y="760.5" width="1" height="184" fill="#e4e4e4"/><rect x="1223.5" y="944" width="93" height="1.3" fill="#181818"/><rect x="1315.5" y="760.5" width="1.3" height="184" fill="#383838"/><text x="1268.8" y="772.6" font-size="9.2" fill="#242424" text-anchor="middle">Source</text><path d="M1234 782.600L1245.800 776.700V782.600" fill="none" stroke="#c8a080" stroke-width="1.1"/><text x="1255" y="781.8" font-size="8.6" fill="#f0f048" font-weight="bold" text-anchor="middle">A</text><text x="1270" y="781.8" font-size="8.6" fill="#3898e0" font-weight="bold" text-anchor="middle">B</text><text x="1284.5" y="781.8" font-size="8.6" fill="#d83898" font-weight="bold" text-anchor="middle">C</text><text x="1299.3" y="781.8" font-size="8.6" fill="#28a858" font-weight="bold" text-anchor="middle">D</text><rect x="1231.3" y="785.7" width="78.1" height="13.8" fill="#aaaaaa"/><rect x="1231.3" y="785.7" width="78.1" height="1.2" fill="#303030"/><rect x="1231.3" y="785.7" width="1.2" height="13.8" fill="#303030"/><rect x="1231.3" y="798.3" width="78.1" height="1.2" fill="#f4f4f4"/><rect x="1308.2" y="785.7" width="1.2" height="13.8" fill="#f4f4f4"/><rect x="1247.3" y="791.4" width="55.6" height="2.4" fill="#080808"/><rect x="1233.2" y="787.9" width="14.1" height="9.6" fill="url(#kn)" stroke="#505050" stroke-width="0.8"/><rect x="1236.2" y="788.9" width="1" height="7.8" fill="#484848"/><rect x="1238.8" y="788.9" width="1" height="7.8" fill="#484848"/><rect x="1241.4" y="788.9" width="1" height="7.8" fill="#484848"/><rect x="1244" y="788.9" width="1" height="7.8" fill="#484848"/><text x="1269.1" y="810.3" font-size="9.2" fill="#242424" text-anchor="middle">Position</text><rect x="1230.6" y="814.4" width="79.7" height="38.1" fill="#aaaaaa" stroke="#101010" stroke-width="1.1"/><rect x="1231.6" y="851" width="78" height="1" fill="#e8e8e8"/><rect x="1308.8" y="815.4" width="1" height="36" fill="#e8e8e8"/><rect x="1233.2" y="821" width="74.8" height="24.4" fill="url(#gh)"/><rect x="1233.2" y="820" width="74.8" height="1" fill="#f0f0f0"/><rect x="1233.2" y="845.4" width="74.8" height="1.2" fill="#282828"/><path d="M1235.2 821v2.4M1235.2 845.400v-2.4M1237.2 821v2.4M1237.2 845.400v-2.4M1239.2 821v2.4M1239.2 845.400v-2.4M1241.2 821v2.4M1241.2 845.400v-2.4M1243.2 821v4M1243.2 845.400v-4M1245.2 821v2.4M1245.2 845.400v-2.4M1247.2 821v2.4M1247.2 845.400v-2.4M1249.2 821v2.4M1249.2 845.400v-2.4M1251.2 821v2.4M1251.2 845.400v-2.4M1253.2 821v4M1253.2 845.400v-4M1255.2 821v2.4M1255.2 845.400v-2.4M1257.2 821v2.4M1257.2 845.400v-2.4M1259.2 821v2.4M1259.2 845.400v-2.4M1261.2 821v2.4M1261.2 845.400v-2.4M1263.2 821v4M1263.2 845.400v-4M1265.2 821v2.4M1265.2 845.400v-2.4M1267.2 821v2.4M1267.2 845.400v-2.4M1269.2 821v2.4M1269.2 845.400v-2.4M1271.2 821v2.4M1271.2 845.400v-2.4M1273.2 821v4M1273.2 845.400v-4M1275.2 821v2.4M1275.2 845.400v-2.4M1277.2 821v2.4M1277.2 845.400v-2.4M1279.2 821v2.4M1279.2 845.400v-2.4M1281.2 821v2.4M1281.2 845.400v-2.4M1283.2 821v4M1283.2 845.400v-4M1285.2 821v2.4M1285.2 845.400v-2.4M1287.2 821v2.4M1287.2 845.400v-2.4M1289.2 821v2.4M1289.2 845.400v-2.4M1291.2 821v2.4M1291.2 845.400v-2.4M1293.2 821v4M1293.2 845.400v-4M1295.2 821v2.4M1295.2 845.400v-2.4M1297.2 821v2.4M1297.2 845.400v-2.4M1299.2 821v2.4M1299.2 845.400v-2.4M1301.2 821v2.4M1301.2 845.400v-2.4M1303.2 821v4M1303.2 845.400v-4M1305.2 821v2.4M1305.2 845.400v-2.4" fill="none" stroke="#303030" stroke-width="0.8" opacity="0.75"/><text x="1273" y="836.5" font-size="9.4" fill="#080808" text-anchor="middle">450</text><text x="1253" y="836.5" font-size="9.4" fill="#080808" text-anchor="middle">460</text><text x="1293" y="836.5" font-size="9.4" fill="#080808" text-anchor="middle">440</text><text x="1233.8" y="836.5" font-size="9.4" fill="#080808">'0</text><polygon points="1264.9,815 1273.9,815 1269.4,820" fill="#e81010"/><polygon points="1264.9,852 1273.9,852 1269.4,846.8" fill="#e81010"/><path d="M1226.5 941.7V898A44 43.7 0 0 1 1314.5 898V941.7H1289.3V920H1251.7V941.7Z" fill="#fcfcfc" stroke="#404040" stroke-width="1"/><rect x="1252.2" y="918" width="36.6" height="24.2" fill="#aaaaaa"/><path d="M1251.7 941.7V920M1289.3 941.7V920" fill="none" stroke="#404040" stroke-width="1"/><polygon points="1284.33,871.87 1292.44,858.77 1295.84,860.88 1287.73,873.97" fill="#aaaaaa"/><line x1="1284.33" y1="871.87" x2="1291.7" y2="859.96" stroke="#404040" stroke-width="0.9"/><line x1="1287.73" y1="873.97" x2="1295.1" y2="862.07" stroke="#404040" stroke-width="0.9"/><text x="1242.7" y="929.8" font-size="6.8" fill="#242424" text-anchor="middle">200</text><text x="1236" y="921.3" font-size="6.8" fill="#242424" text-anchor="middle">100</text><text x="1231.9" y="911.3" font-size="6.8" fill="#242424" text-anchor="middle">50</text><text x="1231.9" y="899.6" font-size="6.8" fill="#242424" text-anchor="middle">20</text><text x="1232.5" y="889" font-size="6.8" fill="#242424" text-anchor="middle">10</text><text x="1238" y="879.1" font-size="6.8" fill="#242424" text-anchor="middle">5</text><text x="1245.5" y="870.8" font-size="6.8" fill="#242424" text-anchor="middle">2</text><text x="1255.1" y="864.8" font-size="6.8" fill="#242424" text-anchor="middle">1</text><text x="1264.4" y="860.8" font-size="6.8" fill="#242424" text-anchor="middle">0.5</text><text x="1275.9" y="860.8" font-size="6.8" fill="#242424" text-anchor="middle">0.2</text><text x="1284.9" y="865.2" font-size="6.8" fill="#242424" text-anchor="middle">0.1</text><text x="1296" y="872.6" font-size="6.8" fill="#242424" text-anchor="middle">50</text><text x="1303" y="879.1" font-size="6.8" fill="#242424" text-anchor="middle">20</text><text x="1307.1" y="889" font-size="6.8" fill="#242424" text-anchor="middle">10</text><text x="1309" y="900.1" font-size="6.8" fill="#242424" text-anchor="middle">5</text><text x="1308.6" y="910.1" font-size="6.8" fill="#242424" text-anchor="middle">2</text><text x="1303.4" y="921.3" font-size="6.8" fill="#242424" text-anchor="middle">1</text><text x="1298.2" y="929.3" font-size="6.8" fill="#242424" text-anchor="middle">0.5</text><path d="M1249.99 918.51L1246.74 921.76M1245.16 912.11L1241.15 914.35M1242.27 904.64L1237.79 905.69M1241.53 896.66L1236.94 896.45M1243 888.78L1238.64 887.32M1246.58 881.61L1242.78 879.01M1251.97 875.69L1249.03 872.15M1258.79 871.47L1256.93 867.26M1266.49 869.28L1265.86 864.72M1274.51 869.28L1275.14 864.72M1282.21 871.47L1284.07 867.26M1289.03 875.69L1291.97 872.15M1294.42 881.61L1298.22 879.01M1298 888.78L1302.36 887.32M1299.47 896.66L1304.06 896.45M1298.73 904.64L1303.21 905.69M1295.84 912.11L1299.85 914.35M1291.01 918.51L1294.26 921.76" fill="none" stroke="#303030" stroke-width="0.9"/><circle cx="1271.3" cy="899.2" r="29.6" fill="#585858" opacity="0.55"/><circle cx="1270.5" cy="898" r="29.3" fill="url(#ko)"/><circle cx="1271.1" cy="899" r="15.6" fill="#484848" opacity="0.5"/><circle cx="1270.5" cy="898" r="14.8" fill="url(#ki)" stroke="#8c8c8c" stroke-width="0.7"/><polygon points="1247.3,883.6 1257.8,883.2 1251.5,892.3" fill="#e88428"/><polygon points="1272.7,906.3 1279.5,903 1279.2,910.5" fill="#e88428"/><rect x="1253.2" y="928.7" width="35" height="13" fill="#fff"/><rect x="1253.2" y="928.7" width="35" height="1.4" fill="#202020"/><rect x="1253.2" y="928.7" width="1.4" height="13" fill="#202020"/><text x="1255.7" y="937.5" font-size="9.4" fill="#000058">5m</text><text x="1238.3" y="937.4" font-size="9.2" fill="#242424" text-anchor="middle">ms</text><text x="1302.3" y="937.4" font-size="9.2" fill="#242424" text-anchor="middle">µs</text><rect x="1317.5" y="733" width="93" height="26" fill="#aaaaaa"/><rect x="1317.5" y="733" width="93" height="1" fill="#e4e4e4"/><rect x="1317.5" y="733" width="1" height="26" fill="#e4e4e4"/><rect x="1317.5" y="758.5" width="93" height="1.3" fill="#181818"/><rect x="1409.5" y="733" width="1.3" height="26" fill="#383838"/><text x="1334.6" y="752" font-size="13.2" fill="#2c98e0" font-weight="bold" textLength="56.4" lengthAdjust="spacingAndGlyphs">Channel B</text><rect x="1317.5" y="760.5" width="93" height="184" fill="#aaaaaa"/><rect x="1317.5" y="760.5" width="93" height="1" fill="#e4e4e4"/><rect x="1317.5" y="760.5" width="1" height="184" fill="#e4e4e4"/><rect x="1317.5" y="944" width="93" height="1.3" fill="#181818"/><rect x="1409.5" y="760.5" width="1.3" height="184" fill="#383838"/><text x="1331.3" y="769.8" font-size="9.2" fill="#242424" textLength="32" lengthAdjust="spacingAndGlyphs">Position</text><rect x="1328.9" y="772.7" width="38.7" height="79.9" fill="#aaaaaa" stroke="#101010" stroke-width="1.1"/><rect x="1329.9" y="851" width="37.2" height="1" fill="#e8e8e8"/><rect x="1366" y="773.7" width="1" height="78.4" fill="#e8e8e8"/><rect x="1336.3" y="775.2" width="24.4" height="74.9" fill="url(#gv)"/><rect x="1335.3" y="775.2" width="1" height="74.9" fill="#f0f0f0"/><rect x="1360.7" y="775.2" width="1.2" height="74.9" fill="#282828"/><path d="M1336.3 779.28h2.8M1360.7 779.28h-2.8M1336.3 783.3h5M1360.7 783.3h-5M1336.3 787.32h2.8M1360.7 787.32h-2.8M1336.3 791.34h2.8M1360.7 791.34h-2.8M1336.3 795.36h2.8M1360.7 795.36h-2.8M1336.3 799.38h2.8M1360.7 799.38h-2.8M1336.3 803.4h5M1360.7 803.4h-5M1336.3 807.42h2.8M1360.7 807.42h-2.8M1336.3 811.44h2.8M1360.7 811.44h-2.8M1336.3 815.46h2.8M1360.7 815.46h-2.8M1336.3 819.48h2.8M1360.7 819.48h-2.8M1336.3 823.5h5M1360.7 823.5h-5M1336.3 827.52h2.8M1360.7 827.52h-2.8M1336.3 831.54h2.8M1360.7 831.54h-2.8M1336.3 835.56h2.8M1360.7 835.56h-2.8M1336.3 839.58h2.8M1360.7 839.58h-2.8M1336.3 843.6h5M1360.7 843.6h-5M1336.3 847.62h2.8M1360.7 847.62h-2.8" fill="none" stroke="#303030" stroke-width="0.8" opacity="0.75"/><text x="1341.9" y="786.3" font-size="9.6" fill="#080808" textLength="12.4" lengthAdjust="spacingAndGlyphs">-90</text><text x="1341.9" y="806.4" font-size="9.6" fill="#080808" textLength="12.4" lengthAdjust="spacingAndGlyphs">-80</text><text x="1341.9" y="826.2" font-size="9.6" fill="#080808" textLength="12.4" lengthAdjust="spacingAndGlyphs">-70</text><text x="1341.9" y="846.1" font-size="9.6" fill="#080808" textLength="12.4" lengthAdjust="spacingAndGlyphs">-60</text><polygon points="1330.4,806.8 1330.4,815.8 1335.3,811.3" fill="#e81010"/><polygon points="1366.1,806.8 1366.1,815.8 1361.9,811.3" fill="#e81010"/><path d="M1323.3 799.8l3.200 5.500h-2.200v10h2.200l-3.200 5.500l-3.200 -5.500h2.200v-10h-2.200z" fill="#2c98e0"/><text x="1392" y="775.5" font-size="9.2" fill="#242424" text-anchor="end">AC</text><text x="1392" y="789.55" font-size="9.2" fill="#242424" text-anchor="end">DC</text><text x="1392" y="803.6" font-size="9.2" fill="#242424" text-anchor="end">GND</text><text x="1392" y="817.65" font-size="9.2" fill="#242424" text-anchor="end">OFF</text><rect x="1394.4" y="762.4" width="14.3" height="62.9" fill="#aaaaaa"/><rect x="1394.4" y="762.4" width="14.3" height="1.2" fill="#303030"/><rect x="1394.4" y="762.4" width="1.2" height="62.9" fill="#303030"/><rect x="1394.4" y="824.1" width="14.3" height="1.2" fill="#f4f4f4"/><rect x="1407.5" y="762.4" width="1.2" height="62.9" fill="#f4f4f4"/><rect x="1400.35" y="767.9" width="2.4" height="51.9" fill="#080808"/><rect x="1396.7" y="764" width="9.7" height="14.3" fill="url(#kn)" stroke="#505050" stroke-width="0.8"/><rect x="1397.6" y="766.3" width="8" height="1" fill="#585858"/><rect x="1397.6" y="768.65" width="8" height="1" fill="#585858"/><rect x="1397.6" y="771" width="8" height="1" fill="#585858"/><rect x="1397.6" y="773.35" width="8" height="1" fill="#585858"/><rect x="1397.6" y="775.7" width="8" height="1" fill="#585858"/><text x="1392" y="836.4" font-size="9.2" fill="#242424" textLength="22.3" lengthAdjust="spacingAndGlyphs" text-anchor="end">Invert</text><rect x="1394.4" y="827.8" width="14.3" height="13" fill="url(#bd)"/><rect x="1394.4" y="827.8" width="14.3" height="1" fill="#c8c8c8"/><rect x="1394.4" y="827.8" width="1" height="13" fill="#c8c8c8"/><rect x="1394.4" y="839.5" width="14.3" height="1.3" fill="#202020"/><rect x="1407.4" y="827.8" width="1.3" height="13" fill="#202020"/><path d="M1320.5 942.2V898.5A44 43.7 0 0 1 1408.5 898.5V942.2H1383.3V920.5H1345.7V942.2Z" fill="#fcfcfc" stroke="#404040" stroke-width="1"/><rect x="1346.2" y="918.5" width="36.6" height="24.2" fill="#aaaaaa"/><path d="M1345.7 942.2V920.5M1383.3 942.2V920.5" fill="none" stroke="#404040" stroke-width="1"/><polygon points="1379.23,872.86 1387.78,860.06 1391.11,862.28 1382.55,875.08" fill="#aaaaaa"/><line x1="1379.23" y1="872.86" x2="1387" y2="861.22" stroke="#404040" stroke-width="0.9"/><line x1="1382.55" y1="875.08" x2="1390.33" y2="863.44" stroke="#404040" stroke-width="0.9"/><text x="1337.21" y="928.29" font-size="7" fill="#242424" text-anchor="middle">20</text><text x="1328.84" y="915.77" font-size="7" fill="#242424" text-anchor="middle">10</text><text x="1325.9" y="901" font-size="7" fill="#242424" text-anchor="middle">5</text><text x="1328.84" y="886.23" font-size="7" fill="#242424" text-anchor="middle">2</text><text x="1337.21" y="873.71" font-size="7" fill="#242424" text-anchor="middle">1</text><text x="1349.77" y="864.97" font-size="7" fill="#242424" text-anchor="middle">0.5</text><text x="1364.5" y="862" font-size="7" fill="#242424" text-anchor="middle">0.2</text><text x="1377.23" y="864.97" font-size="7" fill="#242424" text-anchor="middle">0.1</text><text x="1392.99" y="873.71" font-size="7" fill="#242424" text-anchor="middle">50</text><text x="1400.16" y="886.23" font-size="7" fill="#242424" text-anchor="middle">20</text><text x="1403.1" y="901" font-size="7" fill="#242424" text-anchor="middle">10</text><text x="1400.16" y="915.77" font-size="7" fill="#242424" text-anchor="middle">5</text><text x="1391.79" y="928.29" font-size="7" fill="#242424" text-anchor="middle">2</text><path d="M1343.99 919.01L1340.74 922.26M1337.71 909.6L1333.46 911.36M1335.5 898.5L1330.9 898.5M1337.71 887.4L1333.46 885.64M1343.99 877.99L1340.74 874.74M1353.4 871.71L1351.64 867.46M1364.5 869.5L1364.5 864.9M1375.6 871.71L1377.36 867.46M1385.01 877.99L1388.26 874.74M1391.29 887.4L1395.54 885.64M1393.5 898.5L1398.1 898.5M1391.29 909.6L1395.54 911.36M1385.01 919.01L1388.26 922.26" fill="none" stroke="#303030" stroke-width="0.9"/><circle cx="1365.3" cy="899.7" r="29.6" fill="#585858" opacity="0.55"/><circle cx="1364.5" cy="898.5" r="29.3" fill="url(#ko)"/><circle cx="1365.1" cy="899.5" r="15.6" fill="#484848" opacity="0.5"/><circle cx="1364.5" cy="898.5" r="14.8" fill="url(#ki)" stroke="#8c8c8c" stroke-width="0.7"/><polygon points="1346.5,908.3 1345.6,918.2 1359.2,914.4" fill="#2c98e0"/><polygon points="1355.3,902.8 1354.8,908.8 1360.5,906.5" fill="#2c98e0"/><rect x="1347.2" y="929.2" width="35" height="13" fill="#fff"/><rect x="1347.2" y="929.2" width="35" height="1.4" fill="#202020"/><rect x="1347.2" y="929.2" width="1.4" height="13" fill="#202020"/><text x="1349.7" y="938" font-size="9.4" fill="#000058">50</text><text x="1332.3" y="937.9" font-size="9.2" fill="#242424" text-anchor="middle">V</text><text x="1396.3" y="937.9" font-size="9.2" fill="#242424" text-anchor="middle">mV</text><rect x="1411.5" y="733" width="93" height="26" fill="#aaaaaa"/><rect x="1411.5" y="733" width="93" height="1" fill="#e4e4e4"/><rect x="1411.5" y="733" width="1" height="26" fill="#e4e4e4"/><rect x="1411.5" y="758.5" width="93" height="1.3" fill="#181818"/><rect x="1503.5" y="733" width="1.3" height="26" fill="#383838"/><text x="1428.3" y="752" font-size="13.2" fill="#18a050" font-weight="bold" textLength="56.4" lengthAdjust="spacingAndGlyphs">Channel D</text><rect x="1411.5" y="760.5" width="93" height="184" fill="#aaaaaa"/><rect x="1411.5" y="760.5" width="93" height="1" fill="#e4e4e4"/><rect x="1411.5" y="760.5" width="1" height="184" fill="#e4e4e4"/><rect x="1411.5" y="944" width="93" height="1.3" fill="#181818"/><rect x="1503.5" y="760.5" width="1.3" height="184" fill="#383838"/><text x="1425.3" y="769.8" font-size="9.2" fill="#242424" textLength="32" lengthAdjust="spacingAndGlyphs">Position</text><rect x="1422.9" y="772.7" width="38.7" height="79.9" fill="#aaaaaa" stroke="#101010" stroke-width="1.1"/><rect x="1423.9" y="851" width="37.2" height="1" fill="#e8e8e8"/><rect x="1460" y="773.7" width="1" height="78.4" fill="#e8e8e8"/><rect x="1430.3" y="775.2" width="24.4" height="74.9" fill="url(#gv)"/><rect x="1429.3" y="775.2" width="1" height="74.9" fill="#f0f0f0"/><rect x="1454.7" y="775.2" width="1.2" height="74.9" fill="#282828"/><path d="M1430.3 778.4h2.8M1454.7 778.4h-2.8M1430.3 782.5h2.8M1454.7 782.5h-2.8M1430.3 786.6h2.8M1454.7 786.6h-2.8M1430.3 790.7h5M1454.7 790.7h-5M1430.3 794.8h2.8M1454.7 794.8h-2.8M1430.3 798.9h2.8M1454.7 798.9h-2.8M1430.3 803h2.8M1454.7 803h-2.8M1430.3 807.1h2.8M1454.7 807.1h-2.8M1430.3 811.2h5M1454.7 811.2h-5M1430.3 815.3h2.8M1454.7 815.3h-2.8M1430.3 819.4h2.8M1454.7 819.4h-2.8M1430.3 823.5h2.8M1454.7 823.5h-2.8M1430.3 827.6h2.8M1454.7 827.6h-2.8M1430.3 831.7h2.8M1454.7 831.7h-2.8M1430.3 835.8h2.8M1454.7 835.8h-2.8M1430.3 839.9h2.8M1454.7 839.9h-2.8M1430.3 844h2.8M1454.7 844h-2.8M1430.3 848.1h2.8M1454.7 848.1h-2.8" fill="none" stroke="#303030" stroke-width="0.8" opacity="0.75"/><text x="1433.75" y="793.7" font-size="9.6" fill="#080808" textLength="16.7" lengthAdjust="spacingAndGlyphs">-130</text><text x="1433.75" y="814.2" font-size="9.6" fill="#080808" textLength="16.7" lengthAdjust="spacingAndGlyphs">-120</text><text x="1433.75" y="834.1" font-size="9.6" fill="#080808" textLength="16.7" lengthAdjust="spacingAndGlyphs">-110</text><polygon points="1424.4,806.8 1424.4,815.8 1429.3,811.3" fill="#e81010"/><polygon points="1460.1,806.8 1460.1,815.8 1455.9,811.3" fill="#e81010"/><path d="M1417.3 799.8l3.200 5.500h-2.200v10h2.200l-3.200 5.500l-3.200 -5.500h2.200v-10h-2.200z" fill="#18a050"/><text x="1486" y="775.5" font-size="9.2" fill="#242424" text-anchor="end">AC</text><text x="1486" y="789.55" font-size="9.2" fill="#242424" text-anchor="end">DC</text><text x="1486" y="803.6" font-size="9.2" fill="#242424" text-anchor="end">GND</text><text x="1486" y="817.65" font-size="9.2" fill="#242424" text-anchor="end">OFF</text><rect x="1488.4" y="762.4" width="14.3" height="62.9" fill="#aaaaaa"/><rect x="1488.4" y="762.4" width="14.3" height="1.2" fill="#303030"/><rect x="1488.4" y="762.4" width="1.2" height="62.9" fill="#303030"/><rect x="1488.4" y="824.1" width="14.3" height="1.2" fill="#f4f4f4"/><rect x="1501.5" y="762.4" width="1.2" height="62.9" fill="#f4f4f4"/><rect x="1494.35" y="767.9" width="2.4" height="51.9" fill="#080808"/><rect x="1490.7" y="808.5" width="9.7" height="14.5" fill="url(#kn)" stroke="#505050" stroke-width="0.8"/><rect x="1491.6" y="810.8" width="8" height="1" fill="#585858"/><rect x="1491.6" y="813.15" width="8" height="1" fill="#585858"/><rect x="1491.6" y="815.5" width="8" height="1" fill="#585858"/><rect x="1491.6" y="817.85" width="8" height="1" fill="#585858"/><rect x="1491.6" y="820.2" width="8" height="1" fill="#585858"/><text x="1486" y="836.4" font-size="9.2" fill="#242424" textLength="22.3" lengthAdjust="spacingAndGlyphs" text-anchor="end">Invert</text><rect x="1488.4" y="827.8" width="14.3" height="13" fill="url(#bd)"/><rect x="1488.4" y="827.8" width="14.3" height="1" fill="#c8c8c8"/><rect x="1488.4" y="827.8" width="1" height="13" fill="#c8c8c8"/><rect x="1488.4" y="839.5" width="14.3" height="1.3" fill="#202020"/><rect x="1501.4" y="827.8" width="1.3" height="13" fill="#202020"/><path d="M1414.5 942.2V898.5A44 43.7 0 0 1 1502.5 898.5V942.2H1477.3V920.5H1439.7V942.2Z" fill="#fcfcfc" stroke="#404040" stroke-width="1"/><rect x="1440.2" y="918.5" width="36.6" height="24.2" fill="#aaaaaa"/><path d="M1439.7 942.2V920.5M1477.3 942.2V920.5" fill="none" stroke="#404040" stroke-width="1"/><polygon points="1473.23,872.86 1481.78,860.06 1485.11,862.28 1476.55,875.08" fill="#aaaaaa"/><line x1="1473.23" y1="872.86" x2="1481" y2="861.22" stroke="#404040" stroke-width="0.9"/><line x1="1476.55" y1="875.08" x2="1484.33" y2="863.44" stroke="#404040" stroke-width="0.9"/><text x="1431.21" y="928.29" font-size="7" fill="#242424" text-anchor="middle">20</text><text x="1422.84" y="915.77" font-size="7" fill="#242424" text-anchor="middle">10</text><text x="1419.9" y="901" font-size="7" fill="#242424" text-anchor="middle">5</text><text x="1422.84" y="886.23" font-size="7" fill="#242424" text-anchor="middle">2</text><text x="1431.21" y="873.71" font-size="7" fill="#242424" text-anchor="middle">1</text><text x="1443.77" y="864.97" font-size="7" fill="#242424" text-anchor="middle">0.5</text><text x="1458.5" y="862" font-size="7" fill="#242424" text-anchor="middle">0.2</text><text x="1471.23" y="864.97" font-size="7" fill="#242424" text-anchor="middle">0.1</text><text x="1486.99" y="873.71" font-size="7" fill="#242424" text-anchor="middle">50</text><text x="1494.16" y="886.23" font-size="7" fill="#242424" text-anchor="middle">20</text><text x="1497.1" y="901" font-size="7" fill="#242424" text-anchor="middle">10</text><text x="1494.16" y="915.77" font-size="7" fill="#242424" text-anchor="middle">5</text><text x="1485.79" y="928.29" font-size="7" fill="#242424" text-anchor="middle">2</text><path d="M1437.99 919.01L1434.74 922.26M1431.71 909.6L1427.46 911.36M1429.5 898.5L1424.9 898.5M1431.71 887.4L1427.46 885.64M1437.99 877.99L1434.74 874.74M1447.4 871.71L1445.64 867.46M1458.5 869.5L1458.5 864.9M1469.6 871.71L1471.36 867.46M1479.01 877.99L1482.26 874.74M1485.29 887.4L1489.54 885.64M1487.5 898.5L1492.1 898.5M1485.29 909.6L1489.54 911.36M1479.01 919.01L1482.26 922.26" fill="none" stroke="#303030" stroke-width="0.9"/><circle cx="1459.3" cy="899.7" r="29.6" fill="#585858" opacity="0.55"/><circle cx="1458.5" cy="898.5" r="29.3" fill="url(#ko)"/><circle cx="1459.1" cy="899.5" r="15.6" fill="#484848" opacity="0.5"/><circle cx="1458.5" cy="898.5" r="14.8" fill="url(#ki)" stroke="#8c8c8c" stroke-width="0.7"/><polygon points="1431.2,898.5 1440,893.4 1440,903.6" fill="#18a050"/><polygon points="1462.3,906 1468.8,902.5 1468.5,909.2" fill="#18a050"/><rect x="1441.2" y="929.2" width="35" height="13" fill="#fff"/><rect x="1441.2" y="929.2" width="35" height="1.4" fill="#202020"/><rect x="1441.2" y="929.2" width="1.4" height="13" fill="#202020"/><text x="1443.7" y="938" font-size="9.4" fill="#000058">5</text><text x="1426.3" y="937.9" font-size="9.2" fill="#242424" text-anchor="middle">V</text><text x="1490.3" y="937.9" font-size="9.2" fill="#242424" text-anchor="middle">mV</text></svg></div>
<div id="statusbar" style="position:absolute;left:0px;top:964px;width:1680px;height:26px;overflow:hidden;will-change:transform;"><svg width="1680" height="26" viewBox="0 964 1680 26" style="position:absolute;left:0;top:0;display:block" font-family="Liberation Sans, sans-serif"><defs><radialGradient id="gi" cx="0.4" cy="0.3" r="0.8"><stop offset="0" stop-color="#70e060"/><stop offset="0.6" stop-color="#20a020"/><stop offset="1" stop-color="#0c700c"/></radialGradient></defs><rect x="0" y="964" width="1680" height="26" fill="#e0dfe3"/><rect x="3" y="968" width="1" height="20" fill="#f8f8fc"/><rect x="4" y="968" width="1" height="20" fill="#a8a8b4"/><rect x="10" y="969" width="157" height="18" fill="#000"/><rect x="11" y="970" width="38" height="16" fill="#e6e6ec"/><rect x="11" y="970" width="38" height="1" fill="#fff"/><rect x="11" y="970" width="1" height="16" fill="#fff"/><rect x="11" y="985" width="38" height="1" fill="#9898a4"/><rect x="48" y="970" width="1" height="16" fill="#9898a4"/><rect x="50" y="970" width="38" height="16" fill="#e6e6ec"/><rect x="50" y="970" width="38" height="1" fill="#fff"/><rect x="50" y="970" width="1" height="16" fill="#fff"/><rect x="50" y="985" width="38" height="1" fill="#9898a4"/><rect x="87" y="970" width="1" height="16" fill="#9898a4"/><rect x="89" y="970" width="38" height="16" fill="#e6e6ec"/><rect x="89" y="970" width="38" height="1" fill="#fff"/><rect x="89" y="970" width="1" height="16" fill="#fff"/><rect x="89" y="985" width="38" height="1" fill="#9898a4"/><rect x="126" y="970" width="1" height="16" fill="#9898a4"/><rect x="128" y="970" width="38" height="16" fill="#e6e6ec"/><rect x="128" y="970" width="38" height="1" fill="#fff"/><rect x="128" y="970" width="1" height="16" fill="#fff"/><rect x="128" y="985" width="38" height="1" fill="#9898a4"/><rect x="165" y="970" width="1" height="16" fill="#9898a4"/><polygon points="25,972.5 25,983.5 34,978" fill="#189018"/><rect x="62.5" y="972.5" width="2.5" height="11" fill="#000"/><polygon points="67,972.5 67,983.5 76,978" fill="#000"/><rect x="102.5" y="972.5" width="3" height="11" fill="#c87818"/><rect x="108.5" y="972.5" width="3" height="11" fill="#c87818"/><rect x="141.5" y="973" width="10" height="10" fill="#000"/><rect x="172" y="970" width="98" height="16" fill="#e0dfe3"/><rect x="172" y="970" width="98" height="1" fill="#b8b8c4"/><rect x="172" y="970" width="1" height="16" fill="#b8b8c4"/><rect x="172" y="985" width="98" height="1" fill="#fafafc"/><rect x="269" y="970" width="1" height="16" fill="#fafafc"/><circle cx="182.5" cy="978" r="6.3" fill="url(#gi)" stroke="#107010" stroke-width="0.8"/><rect x="181.5" y="976.5" width="2.2" height="5" fill="#fff"/><circle cx="182.6" cy="974.3" r="1.3" fill="#fff"/><text x="199.5" y="981.8" font-size="11.3" fill="#000" textLength="63" lengthAdjust="spacingAndGlyphs">5 Message(s)</text><rect x="275" y="967" width="1" height="21" fill="#a8a8b4"/><rect x="276" y="967" width="1" height="21" fill="#f8f8fc"/><rect x="279" y="968" width="1" height="20" fill="#f8f8fc"/><rect x="280" y="968" width="1" height="20" fill="#a8a8b4"/><rect x="285" y="970" width="1251" height="16" fill="#e0dfe3"/><rect x="285" y="970" width="1251" height="1" fill="#b8b8c4"/><rect x="285" y="970" width="1" height="16" fill="#b8b8c4"/><rect x="285" y="985" width="1251" height="1" fill="#fafafc"/><rect x="1535" y="970" width="1" height="16" fill="#fafafc"/><text x="288.3" y="981.6" font-size="11.5" fill="#98541a" textLength="130.5" lengthAdjust="spacingAndGlyphs">PAUSED: 00:00:05.550000</text><rect x="1540" y="967" width="1" height="21" fill="#a8a8b4"/><rect x="1541" y="967" width="1" height="21" fill="#f8f8fc"/><rect x="1550" y="970" width="126" height="16" fill="#e0dfe3"/><rect x="1550" y="970" width="126" height="1" fill="#b8b8c4"/><rect x="1550" y="970" width="1" height="16" fill="#b8b8c4"/><rect x="1550" y="985" width="126" height="1" fill="#fafafc"/><rect x="1675" y="970" width="1" height="16" fill="#fafafc"/></svg></div>
<div id="taskbar" style="position:absolute;left:0px;top:990px;width:1680px;height:60px;overflow:hidden;will-change:transform;"><svg width="1680" height="60" viewBox="0 990 1680 60" style="position:absolute;left:0;top:0;display:block" font-family="Liberation Sans, sans-serif"><defs><linearGradient id="tk" x1="0" y1="0" x2="0" y2="1"><stop offset="0" stop-color="#7c7c8c"/><stop offset="0.02" stop-color="#fcfcfe"/><stop offset="0.05" stop-color="#f0f0f6"/><stop offset="0.085" stop-color="#9c9cb2"/><stop offset="0.15" stop-color="#a6a6be"/><stop offset="0.25" stop-color="#bcbec8"/><stop offset="0.3" stop-color="#c4cad2"/><stop offset="0.66" stop-color="#c4cacf"/><stop offset="0.78" stop-color="#c8cace"/><stop offset="0.9" stop-color="#e4e4e2"/><stop offset="0.95" stop-color="#e8eaec"/><stop offset="0.97" stop-color="#9c9cac"/><stop offset="1" stop-color="#74748c"/></linearGradient><linearGradient id="tr" x1="0" y1="0" x2="0" y2="1"><stop offset="0" stop-color="#eeeef4"/><stop offset="0.02" stop-color="#fdfdfe"/><stop offset="0.08" stop-color="#fafafd"/><stop offset="0.2" stop-color="#c9cbdc"/><stop offset="0.9" stop-color="#c8cada"/><stop offset="0.95" stop-color="#b8b8d0"/><stop offset="0.98" stop-color="#8c8ca8"/><stop offset="1" stop-color="#646480"/></linearGradient><linearGradient id="st" x1="0" y1="0" x2="0" y2="1"><stop offset="0" stop-color="#2c7424"/><stop offset="0.04" stop-color="#86d464"/><stop offset="0.15" stop-color="#b4e4a4"/><stop offset="0.3" stop-color="#88c66a"/><stop offset="0.4" stop-color="#64aa4e"/><stop offset="0.55" stop-color="#52a044"/><stop offset="0.68" stop-color="#389038"/><stop offset="0.78" stop-color="#229622"/><stop offset="0.9" stop-color="#36a44c"/><stop offset="0.96" stop-color="#36a04e"/><stop offset="1" stop-color="#206820"/></linearGradient><linearGradient id="st2" x1="0" y1="0" x2="1" y2="0"><stop offset="0" stop-color="#1c6c1c" stop-opacity="0"/><stop offset="1" stop-color="#145414" stop-opacity="0.6"/></linearGradient><linearGradient id="tb" x1="0" y1="0" x2="0" y2="1"><stop offset="0" stop-color="#f8f8fc"/><stop offset="0.55" stop-color="#e8e8f0"/><stop offset="1" stop-color="#d0d2de"/></linearGradient></defs><rect x="0" y="990" width="1680" height="60" fill="url(#tk)"/><path d="M0 991h84q12 2 12 14t-12 14h-84z" fill="url(#st)" stroke="#1c6818" stroke-width="0.8"/><path d="M78 991h6q12 2 12 14t-12 14h-6z" fill="url(#st2)"/><path d="M11.500 998q3.500 -2.500 7.500 0l-1.500 6q-4 -2.500 -7.500 0z" fill="#e85020"/><path d="M20.500 998.500q3.500 2.500 7.500 0l-1.500 6q-4 2.500 -7.500 0z" fill="#58b830"/><path d="M9.500 1005.500q3.500 -2.500 7.500 0l-1.500 6q-4 -2.500 -7.500 0z" fill="#3078e0"/><path d="M18.500 1006q3.500 2.500 7.500 0l-1.500 6q-4 2.500 -7.500 0z" fill="#f0c020"/><text x="36" y="1011" font-size="18" fill="#1c5018" font-weight="bold" textLength="36" lengthAdjust="spacingAndGlyphs" font-style="italic" opacity="0.6">пуск</text><text x="35" y="1010" font-size="18" fill="#fff" font-weight="bold" textLength="36" lengthAdjust="spacingAndGlyphs" font-style="italic">пуск</text><circle cx="116" cy="1004.5" r="7.3" fill="#e89818" stroke="#38280c" stroke-width="1.8"/><path d="M116 1000l4.500 7.500h-9z" fill="none" stroke="#38280c" stroke-width="1.6"/><rect x="131" y="996.5" width="16" height="16" fill="#3878b8" stroke="#204880" stroke-width="1"/><path d="M131 996.5q9 2 5 16" fill="none" stroke="#a8d0f0" stroke-width="1"/><text x="133" y="1007" font-size="6" fill="#d8ecff" font-weight="bold" textLength="12" lengthAdjust="spacingAndGlyphs">KMP</text><circle cx="161.5" cy="1004.5" r="7.6" fill="#d82020" stroke="#901010" stroke-width="1"/><path d="M161.500 999q-3.500 0 -3.500 5.500t3.500 5.500t3.500 -5.500t-3.500 -5.500z" fill="#fff"/><circle cx="185" cy="1004.5" r="7.4" fill="#d8d0c8" stroke="#202020" stroke-width="1.4"/><circle cx="185" cy="1004.5" r="2.2" fill="#fff" stroke="#807060" stroke-width="0.8"/><path d="M185 1004.5l-6 4M185 1004.5l5 5" fill="none" stroke="#a07050" stroke-width="2.2" opacity="0.6"/><rect x="200.5" y="996.5" width="15" height="16" fill="#2848c0" stroke="#182880" stroke-width="1"/><rect x="203" y="1005" width="10" height="6" fill="#fff"/><rect x="204" y="996.5" width="7" height="5" fill="#e8e8f0"/><path d="M203.500 1007h9M203.500 1009h9" fill="none" stroke="#c02020" stroke-width="1"/><circle cx="116" cy="1035" r="7.6" fill="#189858" stroke="#0c6838" stroke-width="1"/><circle cx="116" cy="1035" r="6.2" fill="none" stroke="#fff" stroke-width="0.8"/><path d="M112.500 1031.5v4q0 3 3 3t3 -3v-4M119.500 1035v7" fill="none" stroke="#fff" stroke-width="2"/><text x="133" y="1041" font-size="19" fill="#2878d8" font-weight="bold">e</text><path d="M130 1040q10 -12 19 -9" fill="none" stroke="#e8b020" stroke-width="1.6"/><circle cx="161.5" cy="1034" r="7.5" fill="#18a8e8" stroke="#0c80c0" stroke-width="0.8"/><circle cx="157" cy="1030" r="3.5" fill="#18a8e8"/><circle cx="166" cy="1038.5" r="3.5" fill="#18a8e8"/><text x="158.3" y="1038.3" font-size="11" fill="#fff" font-weight="bold">S</text><circle cx="186" cy="1031" r="2.6" fill="#d0a040" stroke="#403010" stroke-width="0.8"/><path d="M186 1033.5v5l-4 3h9" fill="none" stroke="#202020" stroke-width="1.6"/><text x="179.5" y="1044" font-size="5.5" fill="#101010" font-weight="bold" textLength="13" lengthAdjust="spacingAndGlyphs">TOWN</text><rect x="202.5" y="1027" width="11" height="16" fill="#b0c8e8" stroke="#6080b0" stroke-width="1" rx="1.5"/><rect x="204.5" y="1029" width="7" height="3.5" fill="#e8f0fc"/><path d="M205 1035h6M205 1037.5h6M205 1040h6" fill="none" stroke="#6888c0" stroke-width="1.2" stroke-dasharray="1.4 1"/><rect x="243.5" y="993.5" width="158" height="24" fill="url(#tb)" stroke="#a4a8b8" stroke-width="1" rx="3"/><rect x="244" y="1017" width="157" height="1.5" fill="#8e92a4" rx="1"/><text x="272.5" y="1008.7" font-size="11" fill="#101018" textLength="114" lengthAdjust="spacingAndGlyphs">Total Commander 7.5...</text><circle cx="259.5" cy="1005" r="7" fill="#3890d0" stroke="#c8d8e8" stroke-width="1.5"/><text x="254.8" y="1008.5" font-size="7.5" fill="#e8ffe0" font-weight="bold" textLength="9.5" lengthAdjust="spacingAndGlyphs">TC</text><rect x="403.5" y="993.5" width="157" height="24" fill="url(#tb)" stroke="#a4a8b8" stroke-width="1" rx="3"/><rect x="404" y="1017" width="156" height="1.5" fill="#8e92a4" rx="1"/><text x="431.7" y="1008.7" font-size="11" fill="#101018" textLength="97.6" lengthAdjust="spacingAndGlyphs">• Ответить - Opera</text><circle cx="418.5" cy="1005" r="7.5" fill="#d82020" stroke="#901010" stroke-width="1"/><path d="M418.500 999.800q-3.200 0 -3.200 5.200t3.200 5.200t3.200 -5.200t-3.200 -5.200z" fill="#fff"/><rect x="563.5" y="993.5" width="158" height="24" fill="url(#tb)" stroke="#a4a8b8" stroke-width="1" rx="3"/><rect x="564" y="1017" width="157" height="1.5" fill="#8e92a4" rx="1"/><text x="591.7" y="1008.7" font-size="11" fill="#101018" textLength="111" lengthAdjust="spacingAndGlyphs">Algorithm Builder for ...</text><circle cx="576" cy="1007.5" r="3.6" fill="#28a028"/><circle cx="580.5" cy="1003.5" r="3.6" fill="#d02020"/><circle cx="584" cy="1007.5" r="3.4" fill="#101010"/><rect x="723.5" y="993.5" width="158" height="24" fill="#78808e" stroke="#5c6472" stroke-width="1" rx="3"/><rect x="724.5" y="994.5" width="156" height="2" fill="#687080"/><text x="753.3" y="1008.7" font-size="11" fill="#fff" textLength="114" lengthAdjust="spacingAndGlyphs">1 - ISIS Professional (...</text><rect x="733" y="998.5" width="16" height="12" fill="#1818c8"/><path d="M735.500 1002v6M735 1000.500h1.500M738 1008.500h3.500v-3h-3.500v-3h3.500M743 1002v6M742.500 1000.500h1.500M744.500 1008.500h3v-3h-3v-3h3" fill="none" stroke="#fff" stroke-width="1"/><rect x="1513" y="1012.3" width="16" height="15.6" fill="#b8bcc8"/><text x="1513.5" y="1023.5" font-size="10.5" fill="#101018" textLength="12.8" lengthAdjust="spacingAndGlyphs">EN</text><rect x="1549" y="990" width="131" height="60" fill="url(#tr)"/><rect x="1548" y="991" width="1" height="59" fill="#9498a8"/><rect x="1549" y="991" width="1" height="59" fill="#f0f0f6"/><rect x="1559.5" y="999" width="8" height="7" fill="#3048a0" stroke="#182060" stroke-width="1"/><rect x="1564.5" y="995" width="8" height="7" fill="#4060b8" stroke="#182060" stroke-width="1"/><rect x="1561" y="1007" width="5" height="1.5" fill="#c0c4d8"/><path d="M1578 998.500h3l4 -3.500v11l-4 -3.500h-3z" fill="#787880" stroke="#383840" stroke-width="0.8"/><path d="M1587 996q3 4 0 9" fill="none" stroke="#585860" stroke-width="1.2"/><circle cx="1567" cy="1021" r="7" fill="#e85818" stroke="#a03808" stroke-width="1"/><path d="M1563.500 1021a3.500 3.500 0 1 1 3.500 3.500" fill="none" stroke="#fff" stroke-width="2"/><rect x="1578.5" y="1015" width="14" height="10" fill="#182848" stroke="#101828" stroke-width="1"/><path d="M1581 1023v-4M1584 1023v-6M1587 1023v-3M1590 1023v-5" fill="none" stroke="#50a0f0" stroke-width="1.4"/><rect x="1582" y="1026" width="7" height="1.5" fill="#202838"/><text x="1618.4" y="1005" font-size="11" fill="#000" textLength="28" lengthAdjust="spacingAndGlyphs">21:28</text><text x="1612.5" y="1023.7" font-size="11" fill="#000" textLength="40.8" lengthAdjust="spacingAndGlyphs">суббота</text><text x="1604.5" y="1042.9" font-size="11" fill="#000" textLength="55.7" lengthAdjust="spacingAndGlyphs">02.02.2013</text></svg></div>
</body></html>
